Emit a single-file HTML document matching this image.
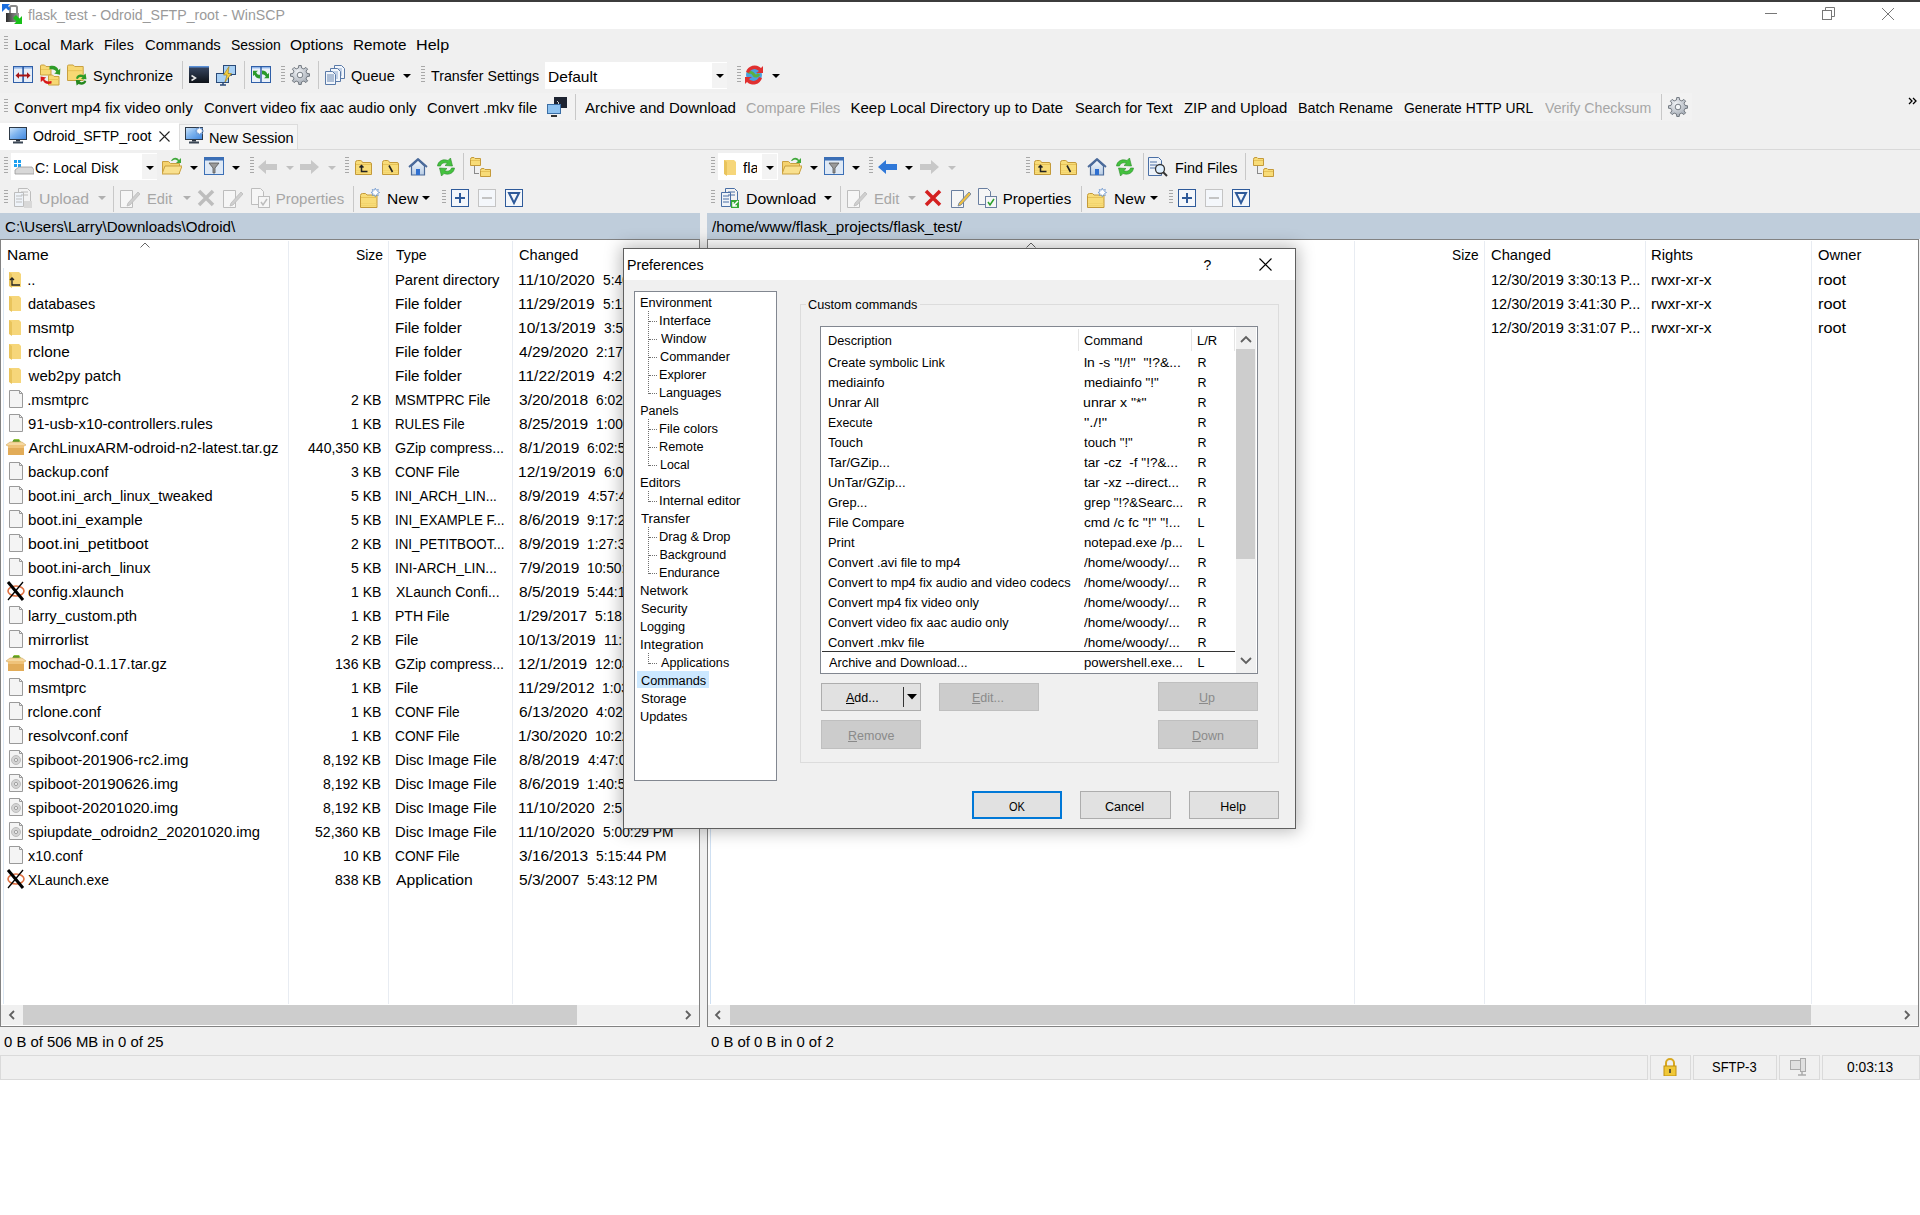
<!DOCTYPE html><html><head><meta charset="utf-8"><title>WinSCP</title><style>
*{margin:0;padding:0;box-sizing:border-box}
html,body{width:1920px;height:1215px;overflow:hidden;background:#fff}
body{position:relative;font-family:"Liberation Sans",sans-serif;font-size:15px;color:#000}
.t{position:absolute;white-space:pre;font-size:15px;line-height:15px}
.r{position:absolute}
.u{text-decoration:underline}
</style></head><body>
<div class="r" style="left:0px;top:0px;width:1920px;height:1080px;background:#f0f0f0;"></div>
<div class="r" style="left:0px;top:0px;width:1920px;height:2px;background:#3c3c3c;"></div>
<div class="r" style="left:0px;top:2px;width:1920px;height:27px;background:#ffffff;"></div>
<svg class="r" style="left:0px;top:0px" width="24" height="26" viewBox="0 0 24 26"><defs><linearGradient id="lg" x1="0" y1="0" x2="1" y2="0"><stop offset="0" stop-color="#2a2a2a"/><stop offset="0.5" stop-color="#6a6a6a"/><stop offset="1" stop-color="#9a9a9a"/></linearGradient></defs><path d="M10 14V7.5a1.5 1.5 0 0 1 1.5-1.5h4a1.5 1.5 0 0 1 1.5 1.5V14" fill="none" stroke="#8a8a8a" stroke-width="2"/><rect x="6" y="13" width="13" height="9" fill="url(#lg)"/><path d="M2 4h8L8 6l2.5 2.5-2 2L6 8l-4 4z" fill="#1a6ee0"/><path d="M22 16v8h-8l2.5-2.5L13 18l3-3 3.5 3.5z" fill="#18c018"/></svg>
<div class="t" style="left:27.81px;top:7px;color:#9a9a9a;transform:scaleX(0.9422);transform-origin:0 0;">flask_test - Odroid_SFTP_root - WinSCP</div>
<div class="r" style="left:1765px;top:13px;width:12px;height:1px;background:#777;"></div>
<svg class="r" style="left:1822px;top:7px" width="14" height="14" viewBox="0 0 14 14"><rect x="0.5" y="3.5" width="9" height="9" fill="none" stroke="#777"/><path d="M3.5 3.5v-3h9v9h-3" fill="none" stroke="#777"/></svg>
<svg class="r" style="left:1881px;top:7px" width="14" height="14" viewBox="0 0 14 14"><path d="M1 1l12 12M13 1L1 13" stroke="#777" stroke-width="1"/></svg>
<svg class="r" style="left:4px;top:36px" width="4" height="16" viewBox="0 0 4 16"><rect x="0" y="0" width="4" height="1" fill="#a8a8a8"/><rect x="0" y="3" width="4" height="1" fill="#a8a8a8"/><rect x="0" y="6" width="4" height="1" fill="#a8a8a8"/><rect x="0" y="9" width="4" height="1" fill="#a8a8a8"/><rect x="0" y="12" width="4" height="1" fill="#a8a8a8"/></svg>
<div class="t" style="left:14.40px;top:37px;">Local</div>
<div class="t" style="left:60.29px;top:37px;transform:scaleX(1.0093);transform-origin:0 0;">Mark</div>
<div class="t" style="left:104.47px;top:37px;transform:scaleX(0.9383);transform-origin:0 0;">Files</div>
<div class="t" style="left:144.71px;top:37px;transform:scaleX(0.9881);transform-origin:0 0;">Commands</div>
<div class="t" style="left:230.94px;top:37px;transform:scaleX(0.9315);transform-origin:0 0;">Session</div>
<div class="t" style="left:290.28px;top:37px;transform:scaleX(1.0297);transform-origin:0 0;">Options</div>
<div class="t" style="left:352.78px;top:37px;transform:scaleX(1.0178);transform-origin:0 0;">Remote</div>
<div class="t" style="left:416.21px;top:37px;transform:scaleX(1.0739);transform-origin:0 0;">Help</div>
<svg class="r" style="left:4px;top:66px" width="4" height="19" viewBox="0 0 4 19"><rect x="0" y="0" width="4" height="1" fill="#a8a8a8"/><rect x="0" y="3" width="4" height="1" fill="#a8a8a8"/><rect x="0" y="6" width="4" height="1" fill="#a8a8a8"/><rect x="0" y="9" width="4" height="1" fill="#a8a8a8"/><rect x="0" y="12" width="4" height="1" fill="#a8a8a8"/><rect x="0" y="15" width="4" height="1" fill="#a8a8a8"/></svg>
<svg class="r" style="left:13px;top:66px" width="20" height="17" viewBox="0 0 20 17"><rect x="0.5" y="0.5" width="19" height="16" fill="#e6eef8" stroke="#2f5fa8"/><rect x="1" y="1" width="18" height="1.6" fill="#8fb4e8"/><rect x="9.3" y="0.5" width="1.6" height="16" fill="#2756a0"/><path d="M2.5 9.5l3.5-3.3v2.3h8v-2.3l3.5 3.3-3.5 3.3v-2.3h-8v2.3z" fill="#a81616"/></svg>
<svg class="r" style="left:40px;top:64px" width="22" height="22" viewBox="0 0 22 22"><path d="M0.5 3V2a1 1 0 0 1 1-1h3l1.5 1.5h5V11H0.5z" fill="#f7d873" stroke="#c9a040"/><rect x="1" y="5" width="10" height="1" fill="#e9c65a"/><path d="M8.5 13v-1a1 1 0 0 1 1-1h3l1.5 1.5h5V21H8.5z" fill="#f7d873" stroke="#c9a040"/><rect x="9" y="15" width="10" height="1" fill="#e9c65a"/><path d="M9.5 2.2C14 1 17.5 2.5 18.5 6.2L20.3 4.4 20 10.8 14.2 9.6 16.3 8C15.4 5.4 12.8 4.8 9.5 5.4z" fill="#2e9c28"/><path d="M11.5 19.6C7.2 20.8 3.8 19.4 3 16.2L0.8 18 0.6 12.6 6.2 13.6 4.2 15.1C5.2 17.3 8 17.9 11.5 17z" fill="#d81818"/></svg>
<svg class="r" style="left:67px;top:64px" width="22" height="22" viewBox="0 0 22 22"><path d="M0.5 4V2.2a1.2 1.2 0 0 1 1.2-1.2h4.5l1.5 1.5h8.5V16.5H0.5z" fill="#f7d873" stroke="#c9a040"/><rect x="1" y="6" width="15" height="1.2" fill="#e9c65a"/><path d="M9 14.5C9.5 10.8 13.5 9.5 16.6 11.2L18.6 9.6 19.5 15.2 13.8 15 15.6 13.6C13.6 12.6 11.6 13.2 11 15z" fill="#2e9c28"/><path d="M19.3 17C18.6 20.6 14.6 21.8 11.6 20.1L9.6 21.6 8.8 16 14.4 16.3 12.6 17.6C14.5 18.6 16.6 18.2 17.3 16.5z" fill="#25881f"/></svg>
<div class="t" style="left:93.42px;top:68px;transform:scaleX(0.9717);transform-origin:0 0;">Synchronize</div>
<div class="r" style="left:182px;top:61px;width:1px;height:28px;background:#c8c8c8;"></div>
<svg class="r" style="left:189px;top:66px" width="20" height="17" viewBox="0 0 20 17"><defs><linearGradient id="cg" x1="0" y1="0" x2="0" y2="1"><stop offset="0" stop-color="#3a4a66"/><stop offset="1" stop-color="#0e1218"/></linearGradient></defs><rect x="0" y="0" width="20" height="17" fill="url(#cg)"/><rect x="0" y="0" width="20" height="1.5" fill="#5a90d8"/><path d="M2.5 9.5l4 2.5-4 2.5" fill="none" stroke="#e8e8e8" stroke-width="1.5"/></svg>
<svg class="r" style="left:216px;top:64px" width="22" height="22" viewBox="0 0 22 22"><rect x="7.5" y="1.5" width="12" height="9" fill="#a8d0f4" stroke="#2a4a78"/><path d="M12 11h4" stroke="#2a4a78" stroke-width="1.5"/><rect x="0.5" y="9.5" width="12" height="9" fill="#a8d0f4" stroke="#2a4a78"/><path d="M4 21h6M7 19v2" stroke="#2a4a78" stroke-width="1.5"/><path d="M13 2.5L7.5 11h3.5L9 18l6.5-8.5H12z" fill="#f4d040" stroke="#a88420" stroke-width="0.7"/></svg>
<div class="r" style="left:244px;top:61px;width:1px;height:28px;background:#c8c8c8;"></div>
<svg class="r" style="left:251px;top:66px" width="20" height="17" viewBox="0 0 20 17"><rect x="0.5" y="0.5" width="19" height="16" fill="#eaf1fa" stroke="#2f5fa8"/><rect x="1" y="1" width="18" height="1.4" fill="#8fb4e8"/><rect x="9.3" y="0.5" width="1.4" height="16" fill="#2756a0"/><path d="M11 4.5c3 0 5 1.5 5.3 3.8l1.7-1.3v5.2h-5l1.8-1.4c-.4-1.6-1.8-2.6-3.8-2.6z" fill="#2a9a2a"/><path d="M9 12.5c-3 0-5-1.5-5.3-3.8L2 10V4.8h5L5.2 6.2c.4 1.6 1.8 2.6 3.8 2.6z" fill="#2a9a2a"/></svg>
<svg class="r" style="left:281px;top:66px" width="4" height="19" viewBox="0 0 4 19"><rect x="0" y="0" width="4" height="1" fill="#a8a8a8"/><rect x="0" y="3" width="4" height="1" fill="#a8a8a8"/><rect x="0" y="6" width="4" height="1" fill="#a8a8a8"/><rect x="0" y="9" width="4" height="1" fill="#a8a8a8"/><rect x="0" y="12" width="4" height="1" fill="#a8a8a8"/><rect x="0" y="15" width="4" height="1" fill="#a8a8a8"/></svg>
<svg class="r" style="left:290px;top:65px" width="20" height="20" viewBox="0 0 20 20"><defs><radialGradient id="gg290" cx="0.4" cy="0.35" r="0.7"><stop offset="0" stop-color="#f2f4f7"/><stop offset="1" stop-color="#9ea6b0"/></radialGradient></defs><polygon points="17.03,8.43 19.52,8.76 19.52,11.24 17.03,11.57 16.08,13.86 17.61,15.85 15.85,17.61 13.86,16.08 11.57,17.03 11.24,19.52 8.76,19.52 8.43,17.03 6.14,16.08 4.15,17.61 2.39,15.85 3.92,13.86 2.97,11.57 0.48,11.24 0.48,8.76 2.97,8.43 3.92,6.14 2.39,4.15 4.15,2.39 6.14,3.92 8.43,2.97 8.76,0.48 11.24,0.48 11.57,2.97 13.86,3.92 15.85,2.39 17.61,4.15 16.08,6.14" fill="url(#gg290)" stroke="#6a7078" stroke-width="0.9" stroke-linejoin="round"/><circle cx="10" cy="10" r="2.8" fill="#f4f6f8" stroke="#6a7078" stroke-width="0.9"/></svg>
<div class="r" style="left:318px;top:61px;width:1px;height:28px;background:#c8c8c8;"></div>
<svg class="r" style="left:325px;top:64px" width="21" height="21" viewBox="0 0 21 21"><path d="M9.5 1.5h7l3 3v10h-10z" fill="#f2f6fb" stroke="#5a7aa8"/><path d="M11 5h6M11 7h6M11 9h6M11 11h6" stroke="#7a9ac8" stroke-width="0.8"/><path d="M5.5 4.5h7l3 3v10h-10z" fill="#f2f6fb" stroke="#5a7aa8"/><path d="M7 8h6M7 10h6M7 12h6M7 14h6" stroke="#7a9ac8" stroke-width="0.8"/><path d="M0.5 7.5h7l3 3v10h-10z" fill="#f2f6fb" stroke="#5a7aa8"/><path d="M2 11h7M2 13h7M2 15h7M2 17h7" stroke="#5a7aa8" stroke-width="0.9"/></svg>
<div class="t" style="left:351.32px;top:68px;transform:scaleX(0.9725);transform-origin:0 0;">Queue</div>
<svg class="r" style="left:403px;top:74px" width="8" height="4" viewBox="0 0 8 4"><path d="M0 0H8L4 4Z" fill="#000"/></svg>
<svg class="r" style="left:421px;top:66px" width="4" height="19" viewBox="0 0 4 19"><rect x="0" y="0" width="4" height="1" fill="#a8a8a8"/><rect x="0" y="3" width="4" height="1" fill="#a8a8a8"/><rect x="0" y="6" width="4" height="1" fill="#a8a8a8"/><rect x="0" y="9" width="4" height="1" fill="#a8a8a8"/><rect x="0" y="12" width="4" height="1" fill="#a8a8a8"/><rect x="0" y="15" width="4" height="1" fill="#a8a8a8"/></svg>
<div class="t" style="left:431.41px;top:68px;transform:scaleX(0.9504);transform-origin:0 0;">Transfer Settings</div>
<div class="r" style="left:545px;top:62px;width:182px;height:27px;background:#ffffff;"></div>
<div class="r" style="left:712px;top:63px;width:15px;height:25px;background:#f3f3f3;"></div>
<svg class="r" style="left:716px;top:74px" width="8" height="4" viewBox="0 0 8 4"><path d="M0 0H8L4 4Z" fill="#000"/></svg>
<div class="t" style="left:547.76px;top:69px;transform:scaleX(1.0367);transform-origin:0 0;">Default</div>
<svg class="r" style="left:737px;top:66px" width="4" height="19" viewBox="0 0 4 19"><rect x="0" y="0" width="4" height="1" fill="#a8a8a8"/><rect x="0" y="3" width="4" height="1" fill="#a8a8a8"/><rect x="0" y="6" width="4" height="1" fill="#a8a8a8"/><rect x="0" y="9" width="4" height="1" fill="#a8a8a8"/><rect x="0" y="12" width="4" height="1" fill="#a8a8a8"/><rect x="0" y="15" width="4" height="1" fill="#a8a8a8"/></svg>
<svg class="r" style="left:744px;top:65px" width="20" height="20" viewBox="0 0 20 20"><circle cx="10" cy="10" r="8" fill="#4aa0e0"/><path d="M4 8c2-2 5 0 6 2s4 1 5-1" stroke="#5ab040" stroke-width="3" fill="none"/><path d="M2 7a9 9 0 0 1 15-4l2-2v7h-7l3-2a6 6 0 0 0-10 2z" fill="#e03030"/><path d="M18 13a9 9 0 0 1-15 4l-2 2v-7h7l-3 2a6 6 0 0 0 10-2z" fill="#e03030"/></svg>
<svg class="r" style="left:772px;top:74px" width="8" height="4" viewBox="0 0 8 4"><path d="M0 0H8L4 4Z" fill="#000"/></svg>
<div class="r" style="left:0px;top:93px;width:1692px;height:28px;background:#f2f2f2;"></div>
<svg class="r" style="left:4px;top:99px" width="4" height="16" viewBox="0 0 4 16"><rect x="0" y="0" width="4" height="1" fill="#a8a8a8"/><rect x="0" y="3" width="4" height="1" fill="#a8a8a8"/><rect x="0" y="6" width="4" height="1" fill="#a8a8a8"/><rect x="0" y="9" width="4" height="1" fill="#a8a8a8"/><rect x="0" y="12" width="4" height="1" fill="#a8a8a8"/></svg>
<div class="t" style="left:14.29px;top:100px;transform:scaleX(1.0114);transform-origin:0 0;">Convert mp4 fix video only</div>
<div class="t" style="left:203.90px;top:100px;">Convert video fix aac audio only</div>
<div class="t" style="left:427.31px;top:100px;transform:scaleX(0.9873);transform-origin:0 0;">Convert .mkv file</div>
<svg class="r" style="left:547px;top:97px" width="20" height="20" viewBox="0 0 20 20"><rect x="7.5" y="0.5" width="12" height="10" fill="#1d2330" stroke="#1d2330"/><path d="M10 4l2 2-2 2" stroke="#ccc" fill="none"/><rect x="0.5" y="7.5" width="13" height="9" fill="#8ec2f0" stroke="#3a6ea5"/><path d="M4 19h6" stroke="#333" stroke-width="2"/></svg>
<div class="r" style="left:575px;top:94px;width:1px;height:26px;background:#c8c8c8;"></div>
<div class="t" style="left:584.60px;top:100px;transform:scaleX(1.0060);transform-origin:0 0;">Archive and Download</div>
<div class="t" style="left:746.02px;top:100px;color:#a6a6a6;transform:scaleX(0.9668);transform-origin:0 0;">Compare Files</div>
<div class="t" style="left:850.49px;top:100px;">Keep Local Directory up to Date</div>
<div class="t" style="left:1075.02px;top:100px;transform:scaleX(0.9700);transform-origin:0 0;">Search for Text</div>
<div class="t" style="left:1183.60px;top:100px;transform:scaleX(0.9942);transform-origin:0 0;">ZIP and Upload</div>
<div class="t" style="left:1297.60px;top:100px;transform:scaleX(0.9574);transform-origin:0 0;">Batch Rename</div>
<div class="t" style="left:1403.95px;top:100px;transform:scaleX(0.9242);transform-origin:0 0;">Generate HTTP URL</div>
<div class="t" style="left:1544.60px;top:100px;color:#a6a6a6;transform:scaleX(0.9444);transform-origin:0 0;">Verify Checksum</div>
<div class="r" style="left:1661px;top:94px;width:1px;height:26px;background:#c8c8c8;"></div>
<svg class="r" style="left:1668px;top:97px" width="20" height="20" viewBox="0 0 20 20"><defs><radialGradient id="gg1668" cx="0.4" cy="0.35" r="0.7"><stop offset="0" stop-color="#f2f4f7"/><stop offset="1" stop-color="#9ea6b0"/></radialGradient></defs><polygon points="17.03,8.43 19.52,8.76 19.52,11.24 17.03,11.57 16.08,13.86 17.61,15.85 15.85,17.61 13.86,16.08 11.57,17.03 11.24,19.52 8.76,19.52 8.43,17.03 6.14,16.08 4.15,17.61 2.39,15.85 3.92,13.86 2.97,11.57 0.48,11.24 0.48,8.76 2.97,8.43 3.92,6.14 2.39,4.15 4.15,2.39 6.14,3.92 8.43,2.97 8.76,0.48 11.24,0.48 11.57,2.97 13.86,3.92 15.85,2.39 17.61,4.15 16.08,6.14" fill="url(#gg1668)" stroke="#6a7078" stroke-width="0.9" stroke-linejoin="round"/><circle cx="10" cy="10" r="2.8" fill="#f4f6f8" stroke="#6a7078" stroke-width="0.9"/></svg>
<svg class="r" style="left:1908px;top:97px" width="10" height="8" viewBox="0 0 10 8"><path d="M1 1l3 3-3 3M5 1l3 3-3 3" fill="none" stroke="#000" stroke-width="1.3"/></svg>
<div class="r" style="left:0px;top:149px;width:1920px;height:1px;background:#d9d9d9;"></div>
<div class="r" style="left:179px;top:124px;width:119px;height:25px;background:#f5f5f5;border:1px solid #dcdcdc;border-bottom:none"></div>
<div class="r" style="left:0px;top:123px;width:179px;height:27px;background:#ffffff;"></div>
<svg class="r" style="left:9px;top:127px" width="19" height="18" viewBox="0 0 19 18"><defs><linearGradient id="mg9" x1="0" y1="0" x2="1" y2="1"><stop offset="0" stop-color="#cfe6fb"/><stop offset="0.45" stop-color="#7fb4ee"/><stop offset="1" stop-color="#3f86de"/></linearGradient></defs><rect x="0.5" y="0.5" width="17" height="12" fill="url(#mg9)" stroke="#2e3a48"/><rect x="7" y="13" width="4" height="1.5" fill="#2c3440"/><rect x="4" y="14.5" width="10" height="2" fill="#3a4654"/></svg>
<div class="t" style="left:33.34px;top:128px;transform:scaleX(0.9408);transform-origin:0 0;">Odroid_SFTP_root</div>
<svg class="r" style="left:159px;top:131px" width="11" height="11" viewBox="0 0 11 11"><path d="M0.5 0.5l10 10M10.5 0.5l-10 10" stroke="#222" stroke-width="1.1"/></svg>
<svg class="r" style="left:185px;top:127px" width="19" height="18" viewBox="0 0 19 18"><defs><linearGradient id="mg185" x1="0" y1="0" x2="1" y2="1"><stop offset="0" stop-color="#cfe6fb"/><stop offset="0.45" stop-color="#7fb4ee"/><stop offset="1" stop-color="#3f86de"/></linearGradient></defs><rect x="0.5" y="0.5" width="17" height="12" fill="url(#mg185)" stroke="#2e3a48"/><rect x="7" y="13" width="4" height="1.5" fill="#2c3440"/><rect x="4" y="14.5" width="10" height="2" fill="#3a4654"/><polygon points="14.50,-0.20 15.42,1.78 17.47,1.03 16.72,3.08 18.70,4.00 16.72,4.92 17.47,6.97 15.42,6.22 14.50,8.20 13.58,6.22 11.53,6.97 12.28,4.92 10.30,4.00 12.28,3.08 11.53,1.03 13.58,1.78" fill="#ffffff" stroke="#5a8ac8" stroke-width="0.7"/></svg>
<div class="t" style="left:208.84px;top:130px;transform:scaleX(0.9660);transform-origin:0 0;">New Session</div>
<svg class="r" style="left:4px;top:157px" width="4" height="19" viewBox="0 0 4 19"><rect x="0" y="0" width="4" height="1" fill="#a8a8a8"/><rect x="0" y="3" width="4" height="1" fill="#a8a8a8"/><rect x="0" y="6" width="4" height="1" fill="#a8a8a8"/><rect x="0" y="9" width="4" height="1" fill="#a8a8a8"/><rect x="0" y="12" width="4" height="1" fill="#a8a8a8"/><rect x="0" y="15" width="4" height="1" fill="#a8a8a8"/></svg>
<div class="r" style="left:11px;top:153px;width:146px;height:27px;background:#ffffff;"></div>
<div class="r" style="left:142px;top:154px;width:15px;height:25px;background:#f3f3f3;"></div>
<svg class="r" style="left:14px;top:160px" width="20" height="16" viewBox="0 0 20 16"><rect x="0" y="0" width="3" height="3" fill="#1ea0f0"/><rect x="4" y="0" width="3" height="3" fill="#1ea0f0"/><rect x="0" y="4" width="3" height="3" fill="#1ea0f0"/><rect x="4" y="4" width="3" height="3" fill="#1ea0f0"/><path d="M1 10l4-3h13l2 3v4H1z" fill="#d8d8d8" stroke="#9a9a9a" stroke-width="0.8"/></svg>
<div class="t" style="left:35.34px;top:160px;transform:scaleX(0.9453);transform-origin:0 0;">C: Local Disk</div>
<svg class="r" style="left:146px;top:166px" width="8" height="4" viewBox="0 0 8 4"><path d="M0 0H8L4 4Z" fill="#000"/></svg>
<svg class="r" style="left:162px;top:157px" width="20" height="18" viewBox="0 0 20 18"><path d="M0.5 4.5h6l2 2h9v10h-17z" fill="#f5d26e" stroke="#c9a040"/><path d="M3 9h17l-3 8H0z" fill="#f9e08e" stroke="#c9a040"/><path d="M9 4c2-4 6-4 8-1l2-2v5h-5l2-2c-2-2-4-2-6 0z" fill="#3fa83a"/></svg>
<svg class="r" style="left:190px;top:166px" width="8" height="4" viewBox="0 0 8 4"><path d="M0 0H8L4 4Z" fill="#000"/></svg>
<svg class="r" style="left:204px;top:157px" width="20" height="18" viewBox="0 0 20 18"><rect x="0.5" y="0.5" width="19" height="17" fill="#dfe9f5" stroke="#3b6fb6"/><rect x="0.5" y="0.5" width="19" height="3" fill="#3b6fb6"/><path d="M5 6h10l-4 5v5h-2v-5z" fill="#9a9a9a" stroke="#555" stroke-width="0.8"/></svg>
<svg class="r" style="left:232px;top:166px" width="8" height="4" viewBox="0 0 8 4"><path d="M0 0H8L4 4Z" fill="#000"/></svg>
<svg class="r" style="left:250px;top:157px" width="4" height="19" viewBox="0 0 4 19"><rect x="0" y="0" width="4" height="1" fill="#a8a8a8"/><rect x="0" y="3" width="4" height="1" fill="#a8a8a8"/><rect x="0" y="6" width="4" height="1" fill="#a8a8a8"/><rect x="0" y="9" width="4" height="1" fill="#a8a8a8"/><rect x="0" y="12" width="4" height="1" fill="#a8a8a8"/><rect x="0" y="15" width="4" height="1" fill="#a8a8a8"/></svg>
<svg class="r" style="left:258px;top:159px" width="20" height="16" viewBox="0 0 20 16"><path d="M0 8l8-7v4h11v6H8v4z" fill="#c8c8c8"/></svg>
<svg class="r" style="left:286px;top:166px" width="8" height="4" viewBox="0 0 8 4"><path d="M0 0H8L4 4Z" fill="#c0c0c0"/></svg>
<svg class="r" style="left:300px;top:159px" width="20" height="16" viewBox="0 0 20 16"><path d="M19 8l-8-7v4H0v6h11v4z" fill="#c8c8c8"/></svg>
<svg class="r" style="left:328px;top:166px" width="8" height="4" viewBox="0 0 8 4"><path d="M0 0H8L4 4Z" fill="#c0c0c0"/></svg>
<svg class="r" style="left:345px;top:157px" width="4" height="19" viewBox="0 0 4 19"><rect x="0" y="0" width="4" height="1" fill="#a8a8a8"/><rect x="0" y="3" width="4" height="1" fill="#a8a8a8"/><rect x="0" y="6" width="4" height="1" fill="#a8a8a8"/><rect x="0" y="9" width="4" height="1" fill="#a8a8a8"/><rect x="0" y="12" width="4" height="1" fill="#a8a8a8"/><rect x="0" y="15" width="4" height="1" fill="#a8a8a8"/></svg>
<svg class="r" style="left:355px;top:159px" width="18" height="17" viewBox="0 0 18 17"><path d="M0.5 3.5Q0.5 1.5 2.5 1.5H5.5Q6.5 1.5 7 2.5L7.5 3.5H15Q16.5 3.5 16.5 5V15.5H0.5Z" fill="#f8dc78" stroke="#c49a3a"/><path d="M1 5.5h15" stroke="#e6c258"/><path d="M1 11.5h15M1 13.5h15" stroke="#efd068" stroke-width="0.7"/><path d="M4.5 8.5l2-2 2 2M6.5 6.8V12.5h6" fill="none" stroke="#222" stroke-width="1.5"/></svg>
<svg class="r" style="left:382px;top:159px" width="18" height="17" viewBox="0 0 18 17"><path d="M0.5 3.5Q0.5 1.5 2.5 1.5H5.5Q6.5 1.5 7 2.5L7.5 3.5H15Q16.5 3.5 16.5 5V15.5H0.5Z" fill="#f8dc78" stroke="#c49a3a"/><path d="M1 5.5h15" stroke="#e6c258"/><path d="M1 11.5h15M1 13.5h15" stroke="#efd068" stroke-width="0.7"/><path d="M7 6.5l3.5 6.5" stroke="#222" stroke-width="1.6"/></svg>
<svg class="r" style="left:408px;top:157px" width="20" height="19" viewBox="0 0 20 19"><defs><linearGradient id="hg" x1="0" y1="0" x2="0" y2="1"><stop offset="0" stop-color="#f4f8fc"/><stop offset="1" stop-color="#b8cce4"/></linearGradient></defs><path d="M3.5 9v9h13V9L10 3z" fill="url(#hg)" stroke="#4a6a9a" stroke-width="1.2"/><path d="M1 10L10 2l9 8" fill="none" stroke="#4a6a9a" stroke-width="1.8" stroke-linejoin="round"/><rect x="8" y="12" width="4" height="6" fill="#2f6fd0"/></svg>
<svg class="r" style="left:436px;top:157px" width="20" height="20" viewBox="0 0 20 20"><path d="M1.5 9C2 4 7 1.5 12 3.5L14.5 1 16.5 9 9 8.5 11.3 6.3C8 5 5 6.5 4.5 9Z" fill="#44c23e" stroke="#2a8a28" stroke-width="0.6"/><path d="M18.5 11C18 16 13 18.5 8 16.5L5.5 19 3.5 11 11 11.5 8.7 13.7C12 15 15 13.5 15.5 11Z" fill="#44c23e" stroke="#2a8a28" stroke-width="0.6"/></svg>
<div class="r" style="left:463px;top:153px;width:1px;height:27px;background:#c8c8c8;"></div>
<svg class="r" style="left:470px;top:157px" width="21" height="21" viewBox="0 0 21 21"><path d="M0.5 2.5Q0.5 0.5 2 0.5H4L5 1.5H10.5V8.5H0.5Z" fill="#f8dc78" stroke="#c49a3a"/><path d="M1 3.5h9" stroke="#e6c258"/><path d="M10.5 13.5Q10.5 11.5 12 11.5H14L15 12.5H20.5V19.5H10.5Z" fill="#f8dc78" stroke="#c49a3a"/><path d="M11 14.5h9" stroke="#e6c258"/><path d="M4.5 9.5v7h5" fill="none" stroke="#222" stroke-dasharray="1 1"/></svg>
<svg class="r" style="left:4px;top:190px" width="4" height="16" viewBox="0 0 4 16"><rect x="0" y="0" width="4" height="1" fill="#a8a8a8"/><rect x="0" y="3" width="4" height="1" fill="#a8a8a8"/><rect x="0" y="6" width="4" height="1" fill="#a8a8a8"/><rect x="0" y="9" width="4" height="1" fill="#a8a8a8"/><rect x="0" y="12" width="4" height="1" fill="#a8a8a8"/></svg>
<svg class="r" style="left:14px;top:188px" width="20" height="20" viewBox="0 0 20 20"><path d="M4.5 0.5h9l3 3v14h-12z" fill="#f3f3f3" stroke="#bdbdbd"/><path d="M0.5 4.5h9v14h-9z" fill="#eef3f9" stroke="#bdbdbd"/><path d="M2 8h6M2 11h6M2 14h6M7 4h7M7 7h7" stroke="#bdbdbd"/><path d="M10 13h8v7h-8z" fill="#d8d8d8"/></svg>
<div class="t" style="left:38.84px;top:191px;color:#a6a6a6;transform:scaleX(1.0549);transform-origin:0 0;">Upload</div>
<svg class="r" style="left:98px;top:196px" width="8" height="4" viewBox="0 0 8 4"><path d="M0 0H8L4 4Z" fill="#b0b0b0"/></svg>
<div class="r" style="left:113px;top:186px;width:1px;height:26px;background:#c8c8c8;"></div>
<svg class="r" style="left:120px;top:188px" width="20" height="20" viewBox="0 0 20 20"><path d="M0.5 2.5h12v17h-12z" fill="#f6f6f6" stroke="#bdbdbd"/><path d="M8 15l10-11 2 2-10 11-3 1z" fill="#cfcfcf" stroke="#bdbdbd" stroke-width="0.8"/></svg>
<div class="t" style="left:146.83px;top:191px;color:#a6a6a6;transform:scaleX(0.9756);transform-origin:0 0;">Edit</div>
<svg class="r" style="left:183px;top:196px" width="8" height="4" viewBox="0 0 8 4"><path d="M0 0H8L4 4Z" fill="#b0b0b0"/></svg>
<svg class="r" style="left:197px;top:189px" width="18" height="18" viewBox="0 0 18 18"><path d="M2 2l14 14M16 2L2 16" stroke="#bdbdbd" stroke-width="3.5"/></svg>
<svg class="r" style="left:223px;top:188px" width="20" height="20" viewBox="0 0 20 20"><path d="M0.5 2.5h12v17h-12z" fill="#f6f6f6" stroke="#bdbdbd"/><path d="M8 15l10-11 2 2-10 11-3 1z" fill="#cfcfcf" stroke="#bdbdbd" stroke-width="0.8"/></svg>
<svg class="r" style="left:251px;top:188px" width="20" height="20" viewBox="0 0 20 20"><path d="M0.5 0.5h9l3 3v13h-12z" fill="#f6f6f6" stroke="#bdbdbd"/><rect x="7.5" y="8.5" width="11" height="11" fill="#f6f6f6" stroke="#bdbdbd"/><path d="M10 14l2 3 4-6" fill="none" stroke="#bdbdbd" stroke-width="1.5"/></svg>
<div class="t" style="left:275.79px;top:191px;color:#a6a6a6;">Properties</div>
<div class="r" style="left:353px;top:186px;width:1px;height:26px;background:#c8c8c8;"></div>
<svg class="r" style="left:360px;top:188px" width="21" height="21" viewBox="0 0 21 21"><path d="M0.5 7.5Q0.5 5.5 2.5 5.5H5.5L7 7H17V19.5H0.5Z" fill="#f8dc78" stroke="#c49a3a"/><path d="M1 9.5h15.5" stroke="#e6c258"/><path d="M1 15.5h15.5M1 17.5h15.5" stroke="#efd068" stroke-width="0.7"/><polygon points="15.30,0.20 16.26,2.19 18.34,1.46 17.61,3.54 19.60,4.50 17.61,5.46 18.34,7.54 16.26,6.81 15.30,8.80 14.34,6.81 12.26,7.54 12.99,5.46 11.00,4.50 12.99,3.54 12.26,1.46 14.34,2.19" fill="#ffffff" stroke="#5a8ac8" stroke-width="0.7"/></svg>
<div class="t" style="left:386.75px;top:191px;transform:scaleX(1.0381);transform-origin:0 0;">New</div>
<svg class="r" style="left:422px;top:196px" width="8" height="4" viewBox="0 0 8 4"><path d="M0 0H8L4 4Z" fill="#000"/></svg>
<svg class="r" style="left:442px;top:190px" width="4" height="16" viewBox="0 0 4 16"><rect x="0" y="0" width="4" height="1" fill="#a8a8a8"/><rect x="0" y="3" width="4" height="1" fill="#a8a8a8"/><rect x="0" y="6" width="4" height="1" fill="#a8a8a8"/><rect x="0" y="9" width="4" height="1" fill="#a8a8a8"/><rect x="0" y="12" width="4" height="1" fill="#a8a8a8"/></svg>
<svg class="r" style="left:451px;top:189px" width="18" height="18" viewBox="0 0 18 18"><rect x="0.5" y="0.5" width="17" height="17" fill="#f4f7fb" stroke="#2e5a9a"/><path d="M9 4v10M4 9h10" stroke="#2e5a9a" stroke-width="2"/></svg>
<svg class="r" style="left:478px;top:189px" width="18" height="18" viewBox="0 0 18 18"><rect x="0.5" y="0.5" width="17" height="17" fill="#f4f7fb" stroke="#c4c4c4"/><path d="M4 9h10" stroke="#c4c4c4" stroke-width="2"/></svg>
<svg class="r" style="left:505px;top:189px" width="18" height="18" viewBox="0 0 18 18"><rect x="0.5" y="0.5" width="17" height="17" fill="#f4f7fb" stroke="#2e5a9a"/><path d="M4 4h10L9 14z" fill="none" stroke="#2e5a9a" stroke-width="2"/></svg>
<svg class="r" style="left:711px;top:157px" width="4" height="19" viewBox="0 0 4 19"><rect x="0" y="0" width="4" height="1" fill="#a8a8a8"/><rect x="0" y="3" width="4" height="1" fill="#a8a8a8"/><rect x="0" y="6" width="4" height="1" fill="#a8a8a8"/><rect x="0" y="9" width="4" height="1" fill="#a8a8a8"/><rect x="0" y="12" width="4" height="1" fill="#a8a8a8"/><rect x="0" y="15" width="4" height="1" fill="#a8a8a8"/></svg>
<div class="r" style="left:718px;top:153px;width:60px;height:27px;background:#ffffff;"></div>
<div class="r" style="left:762px;top:154px;width:15px;height:25px;background:#f3f3f3;"></div>
<svg class="r" style="left:724px;top:159px" width="12" height="17" viewBox="0 0 12 17"><path d="M0 1h10l2 2v13H2L0 14z" fill="#f6d67a"/><path d="M0 1l3 2v14L0 15z" fill="#e9c45c"/></svg>
<div class="r" style="left:743px;top:158px;width:13.5px;height:19px;overflow:hidden"><div class="t" style="left:0;top:2px">fla</div></div>
<svg class="r" style="left:766px;top:166px" width="8" height="4" viewBox="0 0 8 4"><path d="M0 0H8L4 4Z" fill="#000"/></svg>
<svg class="r" style="left:782px;top:157px" width="20" height="18" viewBox="0 0 20 18"><path d="M0.5 4.5h6l2 2h9v10h-17z" fill="#f5d26e" stroke="#c9a040"/><path d="M3 9h17l-3 8H0z" fill="#f9e08e" stroke="#c9a040"/><path d="M9 4c2-4 6-4 8-1l2-2v5h-5l2-2c-2-2-4-2-6 0z" fill="#3fa83a"/></svg>
<svg class="r" style="left:810px;top:166px" width="8" height="4" viewBox="0 0 8 4"><path d="M0 0H8L4 4Z" fill="#000"/></svg>
<svg class="r" style="left:824px;top:157px" width="20" height="18" viewBox="0 0 20 18"><rect x="0.5" y="0.5" width="19" height="17" fill="#dfe9f5" stroke="#3b6fb6"/><rect x="0.5" y="0.5" width="19" height="3" fill="#3b6fb6"/><path d="M5 6h10l-4 5v5h-2v-5z" fill="#9a9a9a" stroke="#555" stroke-width="0.8"/></svg>
<svg class="r" style="left:852px;top:166px" width="8" height="4" viewBox="0 0 8 4"><path d="M0 0H8L4 4Z" fill="#000"/></svg>
<svg class="r" style="left:869px;top:157px" width="4" height="19" viewBox="0 0 4 19"><rect x="0" y="0" width="4" height="1" fill="#a8a8a8"/><rect x="0" y="3" width="4" height="1" fill="#a8a8a8"/><rect x="0" y="6" width="4" height="1" fill="#a8a8a8"/><rect x="0" y="9" width="4" height="1" fill="#a8a8a8"/><rect x="0" y="12" width="4" height="1" fill="#a8a8a8"/><rect x="0" y="15" width="4" height="1" fill="#a8a8a8"/></svg>
<svg class="r" style="left:878px;top:159px" width="20" height="16" viewBox="0 0 20 16"><path d="M0 8l8-7v4h11v6H8v4z" fill="#2f78d8"/></svg>
<svg class="r" style="left:905px;top:166px" width="8" height="4" viewBox="0 0 8 4"><path d="M0 0H8L4 4Z" fill="#000"/></svg>
<svg class="r" style="left:920px;top:159px" width="20" height="16" viewBox="0 0 20 16"><path d="M19 8l-8-7v4H0v6h11v4z" fill="#c8c8c8"/></svg>
<svg class="r" style="left:948px;top:166px" width="8" height="4" viewBox="0 0 8 4"><path d="M0 0H8L4 4Z" fill="#c0c0c0"/></svg>
<svg class="r" style="left:1026px;top:157px" width="4" height="19" viewBox="0 0 4 19"><rect x="0" y="0" width="4" height="1" fill="#a8a8a8"/><rect x="0" y="3" width="4" height="1" fill="#a8a8a8"/><rect x="0" y="6" width="4" height="1" fill="#a8a8a8"/><rect x="0" y="9" width="4" height="1" fill="#a8a8a8"/><rect x="0" y="12" width="4" height="1" fill="#a8a8a8"/><rect x="0" y="15" width="4" height="1" fill="#a8a8a8"/></svg>
<svg class="r" style="left:1034px;top:159px" width="18" height="17" viewBox="0 0 18 17"><path d="M0.5 3.5Q0.5 1.5 2.5 1.5H5.5Q6.5 1.5 7 2.5L7.5 3.5H15Q16.5 3.5 16.5 5V15.5H0.5Z" fill="#f8dc78" stroke="#c49a3a"/><path d="M1 5.5h15" stroke="#e6c258"/><path d="M1 11.5h15M1 13.5h15" stroke="#efd068" stroke-width="0.7"/><path d="M4.5 8.5l2-2 2 2M6.5 6.8V12.5h6" fill="none" stroke="#222" stroke-width="1.5"/></svg>
<svg class="r" style="left:1060px;top:159px" width="18" height="17" viewBox="0 0 18 17"><path d="M0.5 3.5Q0.5 1.5 2.5 1.5H5.5Q6.5 1.5 7 2.5L7.5 3.5H15Q16.5 3.5 16.5 5V15.5H0.5Z" fill="#f8dc78" stroke="#c49a3a"/><path d="M1 5.5h15" stroke="#e6c258"/><path d="M1 11.5h15M1 13.5h15" stroke="#efd068" stroke-width="0.7"/><path d="M7 6.5l3.5 6.5" stroke="#222" stroke-width="1.6"/></svg>
<svg class="r" style="left:1087px;top:157px" width="20" height="19" viewBox="0 0 20 19"><defs><linearGradient id="hg" x1="0" y1="0" x2="0" y2="1"><stop offset="0" stop-color="#f4f8fc"/><stop offset="1" stop-color="#b8cce4"/></linearGradient></defs><path d="M3.5 9v9h13V9L10 3z" fill="url(#hg)" stroke="#4a6a9a" stroke-width="1.2"/><path d="M1 10L10 2l9 8" fill="none" stroke="#4a6a9a" stroke-width="1.8" stroke-linejoin="round"/><rect x="8" y="12" width="4" height="6" fill="#2f6fd0"/></svg>
<svg class="r" style="left:1115px;top:157px" width="20" height="20" viewBox="0 0 20 20"><path d="M1.5 9C2 4 7 1.5 12 3.5L14.5 1 16.5 9 9 8.5 11.3 6.3C8 5 5 6.5 4.5 9Z" fill="#44c23e" stroke="#2a8a28" stroke-width="0.6"/><path d="M18.5 11C18 16 13 18.5 8 16.5L5.5 19 3.5 11 11 11.5 8.7 13.7C12 15 15 13.5 15.5 11Z" fill="#44c23e" stroke="#2a8a28" stroke-width="0.6"/></svg>
<div class="r" style="left:1143px;top:153px;width:1px;height:27px;background:#c8c8c8;"></div>
<svg class="r" style="left:1148px;top:157px" width="20" height="20" viewBox="0 0 20 20"><path d="M0.5 0.5h10l3 3v15h-13z" fill="#eef3f9" stroke="#4a6fa5"/><path d="M2 5h7M2 8h7M2 11h5" stroke="#4a6fa5"/><circle cx="12" cy="12" r="4.5" fill="#dff0ff" stroke="#333" stroke-width="1.3"/><path d="M15 15l4 4" stroke="#333" stroke-width="2"/></svg>
<div class="t" style="left:1174.85px;top:160px;transform:scaleX(0.9589);transform-origin:0 0;">Find Files</div>
<div class="r" style="left:1245px;top:153px;width:1px;height:27px;background:#c8c8c8;"></div>
<svg class="r" style="left:1253px;top:157px" width="21" height="21" viewBox="0 0 21 21"><path d="M0.5 2.5Q0.5 0.5 2 0.5H4L5 1.5H10.5V8.5H0.5Z" fill="#f8dc78" stroke="#c49a3a"/><path d="M1 3.5h9" stroke="#e6c258"/><path d="M10.5 13.5Q10.5 11.5 12 11.5H14L15 12.5H20.5V19.5H10.5Z" fill="#f8dc78" stroke="#c49a3a"/><path d="M11 14.5h9" stroke="#e6c258"/><path d="M4.5 9.5v7h5" fill="none" stroke="#222" stroke-dasharray="1 1"/></svg>
<svg class="r" style="left:711px;top:190px" width="4" height="16" viewBox="0 0 4 16"><rect x="0" y="0" width="4" height="1" fill="#a8a8a8"/><rect x="0" y="3" width="4" height="1" fill="#a8a8a8"/><rect x="0" y="6" width="4" height="1" fill="#a8a8a8"/><rect x="0" y="9" width="4" height="1" fill="#a8a8a8"/><rect x="0" y="12" width="4" height="1" fill="#a8a8a8"/></svg>
<svg class="r" style="left:721px;top:188px" width="20" height="20" viewBox="0 0 20 20"><path d="M4.5 0.5h9l3 3v14h-12z" fill="#f3f3f3" stroke="#4a6fa5"/><path d="M0.5 4.5h9v14h-9z" fill="#eef3f9" stroke="#4a6fa5"/><path d="M2 8h6M2 11h6M2 14h6M7 4h7M7 7h7" stroke="#4a6fa5"/><path d="M10 12h8v8h-8z" fill="#34a834"/><path d="M17 13l-5 5M12 14v4h4" stroke="#fff" stroke-width="1.5" fill="none"/></svg>
<div class="t" style="left:745.74px;top:191px;transform:scaleX(1.0526);transform-origin:0 0;">Download</div>
<svg class="r" style="left:824px;top:196px" width="8" height="4" viewBox="0 0 8 4"><path d="M0 0H8L4 4Z" fill="#000"/></svg>
<div class="r" style="left:840px;top:186px;width:1px;height:26px;background:#c8c8c8;"></div>
<svg class="r" style="left:847px;top:188px" width="20" height="20" viewBox="0 0 20 20"><path d="M0.5 2.5h12v17h-12z" fill="#f6f6f6" stroke="#bdbdbd"/><path d="M8 15l10-11 2 2-10 11-3 1z" fill="#cfcfcf" stroke="#bdbdbd" stroke-width="0.8"/></svg>
<div class="t" style="left:873.83px;top:191px;color:#a6a6a6;transform:scaleX(0.9756);transform-origin:0 0;">Edit</div>
<svg class="r" style="left:908px;top:196px" width="8" height="4" viewBox="0 0 8 4"><path d="M0 0H8L4 4Z" fill="#b0b0b0"/></svg>
<svg class="r" style="left:924px;top:189px" width="18" height="18" viewBox="0 0 18 18"><path d="M2 2l14 14M16 2L2 16" stroke="#d42020" stroke-width="3.5"/></svg>
<svg class="r" style="left:951px;top:188px" width="20" height="20" viewBox="0 0 20 20"><path d="M0.5 2.5h12v17h-12z" fill="#f6f6f6" stroke="#6a7fa0"/><path d="M8 15l10-11 2 2-10 11-3 1z" fill="#f0c040" stroke="#6a7fa0" stroke-width="0.8"/></svg>
<svg class="r" style="left:978px;top:188px" width="20" height="20" viewBox="0 0 20 20"><path d="M0.5 0.5h9l3 3v13h-12z" fill="#f6f6f6" stroke="#6a7fa0"/><rect x="7.5" y="8.5" width="11" height="11" fill="#f6f6f6" stroke="#6a7fa0"/><path d="M10 14l2 3 4-6" fill="none" stroke="#2aa02a" stroke-width="1.5"/></svg>
<div class="t" style="left:1002.80px;top:191px;">Properties</div>
<div class="r" style="left:1081px;top:186px;width:1px;height:26px;background:#c8c8c8;"></div>
<svg class="r" style="left:1087px;top:188px" width="21" height="21" viewBox="0 0 21 21"><path d="M0.5 7.5Q0.5 5.5 2.5 5.5H5.5L7 7H17V19.5H0.5Z" fill="#f8dc78" stroke="#c49a3a"/><path d="M1 9.5h15.5" stroke="#e6c258"/><path d="M1 15.5h15.5M1 17.5h15.5" stroke="#efd068" stroke-width="0.7"/><polygon points="15.30,0.20 16.26,2.19 18.34,1.46 17.61,3.54 19.60,4.50 17.61,5.46 18.34,7.54 16.26,6.81 15.30,8.80 14.34,6.81 12.26,7.54 12.99,5.46 11.00,4.50 12.99,3.54 12.26,1.46 14.34,2.19" fill="#ffffff" stroke="#5a8ac8" stroke-width="0.7"/></svg>
<div class="t" style="left:1113.75px;top:191px;transform:scaleX(1.0381);transform-origin:0 0;">New</div>
<svg class="r" style="left:1150px;top:196px" width="8" height="4" viewBox="0 0 8 4"><path d="M0 0H8L4 4Z" fill="#000"/></svg>
<svg class="r" style="left:1169px;top:190px" width="4" height="16" viewBox="0 0 4 16"><rect x="0" y="0" width="4" height="1" fill="#a8a8a8"/><rect x="0" y="3" width="4" height="1" fill="#a8a8a8"/><rect x="0" y="6" width="4" height="1" fill="#a8a8a8"/><rect x="0" y="9" width="4" height="1" fill="#a8a8a8"/><rect x="0" y="12" width="4" height="1" fill="#a8a8a8"/></svg>
<svg class="r" style="left:1178px;top:189px" width="18" height="18" viewBox="0 0 18 18"><rect x="0.5" y="0.5" width="17" height="17" fill="#f4f7fb" stroke="#2e5a9a"/><path d="M9 4v10M4 9h10" stroke="#2e5a9a" stroke-width="2"/></svg>
<svg class="r" style="left:1205px;top:189px" width="18" height="18" viewBox="0 0 18 18"><rect x="0.5" y="0.5" width="17" height="17" fill="#f4f7fb" stroke="#c4c4c4"/><path d="M4 9h10" stroke="#c4c4c4" stroke-width="2"/></svg>
<svg class="r" style="left:1232px;top:189px" width="18" height="18" viewBox="0 0 18 18"><rect x="0.5" y="0.5" width="17" height="17" fill="#f4f7fb" stroke="#2e5a9a"/><path d="M4 4h10L9 14z" fill="none" stroke="#2e5a9a" stroke-width="2"/></svg>
<div class="r" style="left:0px;top:213px;width:700px;height:26px;background:#bfcddb;"></div>
<div class="t" style="left:4.79px;top:219px;transform:scaleX(1.0079);transform-origin:0 0;">C:\Users\Larry\Downloads\Odroid\</div>
<div class="r" style="left:707px;top:213px;width:1213px;height:26px;background:#bfcddb;"></div>
<div class="t" style="left:711.70px;top:219px;transform:scaleX(1.0163);transform-origin:0 0;">/home/www/flask_projects/flask_test/</div>
<div class="r" style="left:0px;top:239px;width:700px;height:788px;background:#ffffff;border:1px solid #828282"></div>
<div class="r" style="left:288px;top:241px;width:1px;height:763px;background:#e8ecf2;"></div>
<div class="r" style="left:388px;top:241px;width:1px;height:763px;background:#e8ecf2;"></div>
<div class="r" style="left:512px;top:241px;width:1px;height:763px;background:#e8ecf2;"></div>
<div class="r" style="left:3px;top:268px;width:1px;height:736px;background:#dde8f3;"></div>
<div class="t" style="left:7.05px;top:247px;transform:scaleX(1.0393);transform-origin:0 0;">Name</div>
<svg class="r" style="left:140px;top:242px" width="10" height="6" viewBox="0 0 10 6"><path d="M0.5 5.5l4.5-4.5 4.5 4.5" fill="none" stroke="#666"/></svg>
<div class="t" style="left:356.15px;top:247px;transform:scaleX(0.9247);transform-origin:0 0;">Size</div>
<div class="t" style="left:395.72px;top:247px;transform:scaleX(0.9430);transform-origin:0 0;">Type</div>
<div class="t" style="left:518.62px;top:247px;transform:scaleX(0.9747);transform-origin:0 0;">Changed</div>
<svg class="r" style="left:9px;top:271px" width="12" height="17" viewBox="0 0 12 17"><path d="M0 1h10l2 2v13H2L0 14z" fill="#f6d67a"/><path d="M0 1l3 2v14L0 15z" fill="#e9c45c"/></svg>
<svg class="r" style="left:9px;top:277px" width="12" height="10" viewBox="0 0 12 10"><path d="M1 3l2-2 2 2M3 1v7h8" fill="none" stroke="#222" stroke-width="1.3"/></svg>
<div class="t" style="left:27.20px;top:272px;">..</div>
<div class="t" style="left:394.82px;top:272px;transform:scaleX(0.9866);transform-origin:0 0;">Parent directory</div>
<div class="t" style="left:518.36px;top:272px;transform:scaleX(1.0346);transform-origin:0 0;">11/10/2020</div>
<div class="t" style="left:603.05px;top:272px;transform:scaleX(0.9186);transform-origin:0 0;">5:40:12 PM</div>
<svg class="r" style="left:9px;top:295px" width="12" height="17" viewBox="0 0 12 17"><path d="M0 1h10l2 2v13H2L0 14z" fill="#f6d67a"/><path d="M0 1l3 2v14L0 15z" fill="#e9c45c"/></svg>
<div class="t" style="left:27.92px;top:296px;transform:scaleX(0.9706);transform-origin:0 0;">databases</div>
<div class="t" style="left:394.78px;top:296px;transform:scaleX(1.0155);transform-origin:0 0;">File folder</div>
<div class="t" style="left:518.36px;top:296px;transform:scaleX(1.0346);transform-origin:0 0;">11/29/2019</div>
<div class="t" style="left:602.95px;top:296px;transform:scaleX(0.9186);transform-origin:0 0;">5:12:41 PM</div>
<svg class="r" style="left:9px;top:319px" width="12" height="17" viewBox="0 0 12 17"><path d="M0 1h10l2 2v13H2L0 14z" fill="#f6d67a"/><path d="M0 1l3 2v14L0 15z" fill="#e9c45c"/></svg>
<div class="t" style="left:27.57px;top:320px;transform:scaleX(1.0298);transform-origin:0 0;">msmtp</div>
<div class="t" style="left:394.78px;top:320px;transform:scaleX(1.0155);transform-origin:0 0;">File folder</div>
<div class="t" style="left:518.36px;top:320px;transform:scaleX(1.0346);transform-origin:0 0;">10/13/2019</div>
<div class="t" style="left:604.18px;top:320px;transform:scaleX(0.9186);transform-origin:0 0;">3:52:10 PM</div>
<svg class="r" style="left:9px;top:343px" width="12" height="17" viewBox="0 0 12 17"><path d="M0 1h10l2 2v13H2L0 14z" fill="#f6d67a"/><path d="M0 1l3 2v14L0 15z" fill="#e9c45c"/></svg>
<div class="t" style="left:27.58px;top:344px;transform:scaleX(1.0229);transform-origin:0 0;">rclone</div>
<div class="t" style="left:394.78px;top:344px;transform:scaleX(1.0155);transform-origin:0 0;">File folder</div>
<div class="t" style="left:519.19px;top:344px;transform:scaleX(1.0346);transform-origin:0 0;">4/29/2020</div>
<div class="t" style="left:596.34px;top:344px;transform:scaleX(0.9186);transform-origin:0 0;">2:17:36 PM</div>
<svg class="r" style="left:9px;top:367px" width="12" height="17" viewBox="0 0 12 17"><path d="M0 1h10l2 2v13H2L0 14z" fill="#f6d67a"/><path d="M0 1l3 2v14L0 15z" fill="#e9c45c"/></svg>
<div class="t" style="left:28.60px;top:368px;">web2py patch</div>
<div class="t" style="left:394.78px;top:368px;transform:scaleX(1.0155);transform-origin:0 0;">File folder</div>
<div class="t" style="left:518.36px;top:368px;transform:scaleX(1.0346);transform-origin:0 0;">11/22/2019</div>
<div class="t" style="left:603.22px;top:368px;transform:scaleX(0.9186);transform-origin:0 0;">4:27:08 PM</div>
<svg class="r" style="left:9px;top:390px" width="14" height="18" viewBox="0 0 14 18"><path d="M0.5 0.5h10l3 3v14h-13z" fill="#f4f4f4" stroke="#9a9a9a"/><path d="M10.5 0.5v3h3" fill="none" stroke="#9a9a9a"/></svg>
<div class="t" style="left:27.20px;top:392px;">.msmtprc</div>
<div class="t" style="left:350.71px;top:392px;transform:scaleX(0.9367);transform-origin:0 0;">2 KB</div>
<div class="t" style="left:394.90px;top:392px;transform:scaleX(0.9169);transform-origin:0 0;">MSMTPRC File</div>
<div class="t" style="left:518.98px;top:392px;transform:scaleX(1.0346);transform-origin:0 0;">3/20/2018</div>
<div class="t" style="left:596.03px;top:392px;transform:scaleX(0.9186);transform-origin:0 0;">6:02:33 PM</div>
<svg class="r" style="left:9px;top:414px" width="14" height="18" viewBox="0 0 14 18"><path d="M0.5 0.5h10l3 3v14h-13z" fill="#f4f4f4" stroke="#9a9a9a"/><path d="M10.5 0.5v3h3" fill="none" stroke="#9a9a9a"/></svg>
<div class="t" style="left:27.80px;top:416px;transform:scaleX(0.9935);transform-origin:0 0;">91-usb-x10-controllers.rules</div>
<div class="t" style="left:350.71px;top:416px;transform:scaleX(0.9367);transform-origin:0 0;">1 KB</div>
<div class="t" style="left:394.93px;top:416px;transform:scaleX(0.8876);transform-origin:0 0;">RULES File</div>
<div class="t" style="left:518.88px;top:416px;transform:scaleX(1.0346);transform-origin:0 0;">8/25/2019</div>
<div class="t" style="left:595.55px;top:416px;transform:scaleX(0.9186);transform-origin:0 0;">1:00:52 PM</div>
<svg class="r" style="left:6px;top:439px" width="20" height="16" viewBox="0 0 20 16"><path d="M6 3l2-3h5l2 3z" fill="#8cbf3a"/><path d="M7 1h6v3H7z" fill="#5f9a2a"/><path d="M0 6l4-3h12l4 3-2 1H2z" fill="#f6d9a0" stroke="#d2a860" stroke-width="0.6"/><rect x="2" y="6" width="16" height="10" fill="#e2ac58"/><rect x="2" y="6" width="16" height="3" fill="#efc37a"/></svg>
<div class="t" style="left:28.50px;top:440px;">ArchLinuxARM-odroid-n2-latest.tar.gz</div>
<div class="t" style="left:307.72px;top:440px;transform:scaleX(0.9367);transform-origin:0 0;">440,350 KB</div>
<div class="t" style="left:395.33px;top:440px;transform:scaleX(0.9554);transform-origin:0 0;">GZip compress...</div>
<div class="t" style="left:518.88px;top:440px;transform:scaleX(1.0346);transform-origin:0 0;">8/1/2019</div>
<div class="t" style="left:587.23px;top:440px;transform:scaleX(0.9186);transform-origin:0 0;">6:02:55 PM</div>
<svg class="r" style="left:9px;top:462px" width="14" height="18" viewBox="0 0 14 18"><path d="M0.5 0.5h10l3 3v14h-13z" fill="#f4f4f4" stroke="#9a9a9a"/><path d="M10.5 0.5v3h3" fill="none" stroke="#9a9a9a"/></svg>
<div class="t" style="left:27.61px;top:464px;transform:scaleX(0.9938);transform-origin:0 0;">backup.conf</div>
<div class="t" style="left:350.71px;top:464px;transform:scaleX(0.9367);transform-origin:0 0;">3 KB</div>
<div class="t" style="left:395.36px;top:464px;transform:scaleX(0.9137);transform-origin:0 0;">CONF File</div>
<div class="t" style="left:518.36px;top:464px;transform:scaleX(1.0346);transform-origin:0 0;">12/19/2019</div>
<div class="t" style="left:603.99px;top:464px;transform:scaleX(0.9186);transform-origin:0 0;">6:09:11 PM</div>
<svg class="r" style="left:9px;top:486px" width="14" height="18" viewBox="0 0 14 18"><path d="M0.5 0.5h10l3 3v14h-13z" fill="#f4f4f4" stroke="#9a9a9a"/><path d="M10.5 0.5v3h3" fill="none" stroke="#9a9a9a"/></svg>
<div class="t" style="left:27.62px;top:488px;transform:scaleX(0.9760);transform-origin:0 0;">boot.ini_arch_linux_tweaked</div>
<div class="t" style="left:350.71px;top:488px;transform:scaleX(0.9367);transform-origin:0 0;">5 KB</div>
<div class="t" style="left:394.84px;top:488px;transform:scaleX(0.8915);transform-origin:0 0;">INI_ARCH_LIN...</div>
<div class="t" style="left:518.88px;top:488px;transform:scaleX(1.0346);transform-origin:0 0;">8/9/2019</div>
<div class="t" style="left:587.60px;top:488px;transform:scaleX(0.9186);transform-origin:0 0;">4:57:44 PM</div>
<svg class="r" style="left:9px;top:510px" width="14" height="18" viewBox="0 0 14 18"><path d="M0.5 0.5h10l3 3v14h-13z" fill="#f4f4f4" stroke="#9a9a9a"/><path d="M10.5 0.5v3h3" fill="none" stroke="#9a9a9a"/></svg>
<div class="t" style="left:27.59px;top:512px;transform:scaleX(1.0107);transform-origin:0 0;">boot.ini_example</div>
<div class="t" style="left:350.71px;top:512px;transform:scaleX(0.9367);transform-origin:0 0;">5 KB</div>
<div class="t" style="left:394.84px;top:512px;transform:scaleX(0.8932);transform-origin:0 0;">INI_EXAMPLE F...</div>
<div class="t" style="left:518.88px;top:512px;transform:scaleX(1.0346);transform-origin:0 0;">8/6/2019</div>
<div class="t" style="left:587.23px;top:512px;transform:scaleX(0.9186);transform-origin:0 0;">9:17:26 PM</div>
<svg class="r" style="left:9px;top:534px" width="14" height="18" viewBox="0 0 14 18"><path d="M0.5 0.5h10l3 3v14h-13z" fill="#f4f4f4" stroke="#9a9a9a"/><path d="M10.5 0.5v3h3" fill="none" stroke="#9a9a9a"/></svg>
<div class="t" style="left:27.55px;top:536px;transform:scaleX(1.0547);transform-origin:0 0;">boot.ini_petitboot</div>
<div class="t" style="left:350.71px;top:536px;transform:scaleX(0.9367);transform-origin:0 0;">2 KB</div>
<div class="t" style="left:394.85px;top:536px;transform:scaleX(0.8873);transform-origin:0 0;">INI_PETITBOOT...</div>
<div class="t" style="left:518.88px;top:536px;transform:scaleX(1.0346);transform-origin:0 0;">8/9/2019</div>
<div class="t" style="left:586.86px;top:536px;transform:scaleX(0.9186);transform-origin:0 0;">1:27:33 PM</div>
<svg class="r" style="left:9px;top:558px" width="14" height="18" viewBox="0 0 14 18"><path d="M0.5 0.5h10l3 3v14h-13z" fill="#f4f4f4" stroke="#9a9a9a"/><path d="M10.5 0.5v3h3" fill="none" stroke="#9a9a9a"/></svg>
<div class="t" style="left:27.59px;top:560px;transform:scaleX(1.0058);transform-origin:0 0;">boot.ini-arch_linux</div>
<div class="t" style="left:350.71px;top:560px;transform:scaleX(0.9367);transform-origin:0 0;">5 KB</div>
<div class="t" style="left:394.81px;top:560px;transform:scaleX(0.9187);transform-origin:0 0;">INI-ARCH_LIN...</div>
<div class="t" style="left:518.78px;top:560px;transform:scaleX(1.0346);transform-origin:0 0;">7/9/2019</div>
<div class="t" style="left:586.76px;top:560px;transform:scaleX(0.9186);transform-origin:0 0;">10:50:51 PM</div>
<svg class="r" style="left:6px;top:581px" width="20" height="20" viewBox="0 0 20 20"><ellipse cx="10" cy="10" rx="8" ry="5" fill="none" stroke="#e07040" stroke-width="1.6"/><path d="M2 1L17 19" stroke="#000" stroke-width="3"/><path d="M17 1L2 19" stroke="#000" stroke-width="1.3"/></svg>
<div class="t" style="left:27.90px;top:584px;">config.xlaunch</div>
<div class="t" style="left:350.71px;top:584px;transform:scaleX(0.9367);transform-origin:0 0;">1 KB</div>
<div class="t" style="left:395.72px;top:584px;transform:scaleX(0.9341);transform-origin:0 0;">XLaunch Confi...</div>
<div class="t" style="left:518.88px;top:584px;transform:scaleX(1.0346);transform-origin:0 0;">8/5/2019</div>
<div class="t" style="left:587.32px;top:584px;transform:scaleX(0.9186);transform-origin:0 0;">5:44:16 PM</div>
<svg class="r" style="left:9px;top:606px" width="14" height="18" viewBox="0 0 14 18"><path d="M0.5 0.5h10l3 3v14h-13z" fill="#f4f4f4" stroke="#9a9a9a"/><path d="M10.5 0.5v3h3" fill="none" stroke="#9a9a9a"/></svg>
<div class="t" style="left:27.52px;top:608px;transform:scaleX(0.9835);transform-origin:0 0;">larry_custom.pth</div>
<div class="t" style="left:350.71px;top:608px;transform:scaleX(0.9367);transform-origin:0 0;">1 KB</div>
<div class="t" style="left:394.88px;top:608px;transform:scaleX(0.9327);transform-origin:0 0;">PTH File</div>
<div class="t" style="left:518.36px;top:608px;transform:scaleX(1.0346);transform-origin:0 0;">1/29/2017</div>
<div class="t" style="left:595.39px;top:608px;transform:scaleX(0.9186);transform-origin:0 0;">5:18:20 PM</div>
<svg class="r" style="left:9px;top:630px" width="14" height="18" viewBox="0 0 14 18"><path d="M0.5 0.5h10l3 3v14h-13z" fill="#f4f4f4" stroke="#9a9a9a"/><path d="M10.5 0.5v3h3" fill="none" stroke="#9a9a9a"/></svg>
<div class="t" style="left:27.55px;top:632px;transform:scaleX(1.0513);transform-origin:0 0;">mirrorlist</div>
<div class="t" style="left:350.71px;top:632px;transform:scaleX(0.9367);transform-origin:0 0;">2 KB</div>
<div class="t" style="left:394.84px;top:632px;transform:scaleX(0.9686);transform-origin:0 0;">File</div>
<div class="t" style="left:518.36px;top:632px;transform:scaleX(1.0346);transform-origin:0 0;">10/13/2019</div>
<div class="t" style="left:603.62px;top:632px;transform:scaleX(0.9186);transform-origin:0 0;">11:52:07 AM</div>
<svg class="r" style="left:6px;top:655px" width="20" height="16" viewBox="0 0 20 16"><path d="M6 3l2-3h5l2 3z" fill="#8cbf3a"/><path d="M7 1h6v3H7z" fill="#5f9a2a"/><path d="M0 6l4-3h12l4 3-2 1H2z" fill="#f6d9a0" stroke="#d2a860" stroke-width="0.6"/><rect x="2" y="6" width="16" height="10" fill="#e2ac58"/><rect x="2" y="6" width="16" height="3" fill="#efc37a"/></svg>
<div class="t" style="left:27.61px;top:656px;transform:scaleX(0.9849);transform-origin:0 0;">mochad-0.1.17.tar.gz</div>
<div class="t" style="left:335.07px;top:656px;transform:scaleX(0.9367);transform-origin:0 0;">136 KB</div>
<div class="t" style="left:395.33px;top:656px;transform:scaleX(0.9554);transform-origin:0 0;">GZip compress...</div>
<div class="t" style="left:518.36px;top:656px;transform:scaleX(1.0346);transform-origin:0 0;">12/1/2019</div>
<div class="t" style="left:595.04px;top:656px;transform:scaleX(0.9186);transform-origin:0 0;">12:03:10 PM</div>
<svg class="r" style="left:9px;top:678px" width="14" height="18" viewBox="0 0 14 18"><path d="M0.5 0.5h10l3 3v14h-13z" fill="#f4f4f4" stroke="#9a9a9a"/><path d="M10.5 0.5v3h3" fill="none" stroke="#9a9a9a"/></svg>
<div class="t" style="left:27.59px;top:680px;transform:scaleX(1.0142);transform-origin:0 0;">msmtprc</div>
<div class="t" style="left:350.71px;top:680px;transform:scaleX(0.9367);transform-origin:0 0;">1 KB</div>
<div class="t" style="left:394.84px;top:680px;transform:scaleX(0.9686);transform-origin:0 0;">File</div>
<div class="t" style="left:518.36px;top:680px;transform:scaleX(1.0346);transform-origin:0 0;">11/29/2012</div>
<div class="t" style="left:602.38px;top:680px;transform:scaleX(0.9186);transform-origin:0 0;">1:03:42 PM</div>
<svg class="r" style="left:9px;top:702px" width="14" height="18" viewBox="0 0 14 18"><path d="M0.5 0.5h10l3 3v14h-13z" fill="#f4f4f4" stroke="#9a9a9a"/><path d="M10.5 0.5v3h3" fill="none" stroke="#9a9a9a"/></svg>
<div class="t" style="left:27.60px;top:704px;">rclone.conf</div>
<div class="t" style="left:350.71px;top:704px;transform:scaleX(0.9367);transform-origin:0 0;">1 KB</div>
<div class="t" style="left:395.36px;top:704px;transform:scaleX(0.9137);transform-origin:0 0;">CONF File</div>
<div class="t" style="left:518.78px;top:704px;transform:scaleX(1.0346);transform-origin:0 0;">6/13/2020</div>
<div class="t" style="left:596.29px;top:704px;transform:scaleX(0.9186);transform-origin:0 0;">4:02:18 PM</div>
<svg class="r" style="left:9px;top:726px" width="14" height="18" viewBox="0 0 14 18"><path d="M0.5 0.5h10l3 3v14h-13z" fill="#f4f4f4" stroke="#9a9a9a"/><path d="M10.5 0.5v3h3" fill="none" stroke="#9a9a9a"/></svg>
<div class="t" style="left:27.61px;top:728px;transform:scaleX(0.9910);transform-origin:0 0;">resolvconf.conf</div>
<div class="t" style="left:350.71px;top:728px;transform:scaleX(0.9367);transform-origin:0 0;">1 KB</div>
<div class="t" style="left:395.36px;top:728px;transform:scaleX(0.9137);transform-origin:0 0;">CONF File</div>
<div class="t" style="left:518.36px;top:728px;transform:scaleX(1.0346);transform-origin:0 0;">1/30/2020</div>
<div class="t" style="left:595.14px;top:728px;transform:scaleX(0.9186);transform-origin:0 0;">10:22:19 PM</div>
<svg class="r" style="left:9px;top:750px" width="14" height="18" viewBox="0 0 14 18"><path d="M0.5 0.5h10l3 3v14h-13z" fill="#f4f4f4" stroke="#9a9a9a"/><path d="M10.5 0.5v3h3" fill="none" stroke="#9a9a9a"/><circle cx="7" cy="10" r="4.5" fill="#d4d4d4" stroke="#bdbdbd"/><circle cx="7" cy="10" r="1.6" fill="#f4f4f4" stroke="#a0a0a0"/></svg>
<div class="t" style="left:28.09px;top:752px;transform:scaleX(1.0179);transform-origin:0 0;">spiboot-201906-rc2.img</div>
<div class="t" style="left:323.36px;top:752px;transform:scaleX(0.9367);transform-origin:0 0;">8,192 KB</div>
<div class="t" style="left:394.82px;top:752px;transform:scaleX(0.9842);transform-origin:0 0;">Disc Image File</div>
<div class="t" style="left:518.88px;top:752px;transform:scaleX(1.0346);transform-origin:0 0;">8/8/2019</div>
<div class="t" style="left:587.60px;top:752px;transform:scaleX(0.9186);transform-origin:0 0;">4:47:05 PM</div>
<svg class="r" style="left:9px;top:774px" width="14" height="18" viewBox="0 0 14 18"><path d="M0.5 0.5h10l3 3v14h-13z" fill="#f4f4f4" stroke="#9a9a9a"/><path d="M10.5 0.5v3h3" fill="none" stroke="#9a9a9a"/><circle cx="7" cy="10" r="4.5" fill="#d4d4d4" stroke="#bdbdbd"/><circle cx="7" cy="10" r="1.6" fill="#f4f4f4" stroke="#a0a0a0"/></svg>
<div class="t" style="left:28.10px;top:776px;transform:scaleX(1.0122);transform-origin:0 0;">spiboot-20190626.img</div>
<div class="t" style="left:323.36px;top:776px;transform:scaleX(0.9367);transform-origin:0 0;">8,192 KB</div>
<div class="t" style="left:394.82px;top:776px;transform:scaleX(0.9842);transform-origin:0 0;">Disc Image File</div>
<div class="t" style="left:518.88px;top:776px;transform:scaleX(1.0346);transform-origin:0 0;">8/6/2019</div>
<div class="t" style="left:586.86px;top:776px;transform:scaleX(0.9186);transform-origin:0 0;">1:40:56 PM</div>
<svg class="r" style="left:9px;top:798px" width="14" height="18" viewBox="0 0 14 18"><path d="M0.5 0.5h10l3 3v14h-13z" fill="#f4f4f4" stroke="#9a9a9a"/><path d="M10.5 0.5v3h3" fill="none" stroke="#9a9a9a"/><circle cx="7" cy="10" r="4.5" fill="#d4d4d4" stroke="#bdbdbd"/><circle cx="7" cy="10" r="1.6" fill="#f4f4f4" stroke="#a0a0a0"/></svg>
<div class="t" style="left:28.10px;top:800px;transform:scaleX(1.0122);transform-origin:0 0;">spiboot-20201020.img</div>
<div class="t" style="left:323.36px;top:800px;transform:scaleX(0.9367);transform-origin:0 0;">8,192 KB</div>
<div class="t" style="left:394.82px;top:800px;transform:scaleX(0.9842);transform-origin:0 0;">Disc Image File</div>
<div class="t" style="left:518.36px;top:800px;transform:scaleX(1.0346);transform-origin:0 0;">11/10/2020</div>
<div class="t" style="left:602.96px;top:800px;transform:scaleX(0.9186);transform-origin:0 0;">2:57:13 PM</div>
<svg class="r" style="left:9px;top:822px" width="14" height="18" viewBox="0 0 14 18"><path d="M0.5 0.5h10l3 3v14h-13z" fill="#f4f4f4" stroke="#9a9a9a"/><path d="M10.5 0.5v3h3" fill="none" stroke="#9a9a9a"/><circle cx="7" cy="10" r="4.5" fill="#d4d4d4" stroke="#bdbdbd"/><circle cx="7" cy="10" r="1.6" fill="#f4f4f4" stroke="#a0a0a0"/></svg>
<div class="t" style="left:28.11px;top:824px;transform:scaleX(0.9867);transform-origin:0 0;">spiupdate_odroidn2_20201020.img</div>
<div class="t" style="left:315.49px;top:824px;transform:scaleX(0.9367);transform-origin:0 0;">52,360 KB</div>
<div class="t" style="left:394.82px;top:824px;transform:scaleX(0.9842);transform-origin:0 0;">Disc Image File</div>
<div class="t" style="left:518.36px;top:824px;transform:scaleX(1.0346);transform-origin:0 0;">11/10/2020</div>
<div class="t" style="left:603.05px;top:824px;transform:scaleX(0.9186);transform-origin:0 0;">5:00:29 PM</div>
<svg class="r" style="left:9px;top:846px" width="14" height="18" viewBox="0 0 14 18"><path d="M0.5 0.5h10l3 3v14h-13z" fill="#f4f4f4" stroke="#9a9a9a"/><path d="M10.5 0.5v3h3" fill="none" stroke="#9a9a9a"/></svg>
<div class="t" style="left:28.40px;top:848px;transform:scaleX(0.9594);transform-origin:0 0;">x10.conf</div>
<div class="t" style="left:342.84px;top:848px;transform:scaleX(0.9367);transform-origin:0 0;">10 KB</div>
<div class="t" style="left:395.36px;top:848px;transform:scaleX(0.9137);transform-origin:0 0;">CONF File</div>
<div class="t" style="left:518.98px;top:848px;transform:scaleX(1.0346);transform-origin:0 0;">3/16/2013</div>
<div class="t" style="left:596.12px;top:848px;transform:scaleX(0.9186);transform-origin:0 0;">5:15:44 PM</div>
<svg class="r" style="left:6px;top:869px" width="20" height="20" viewBox="0 0 20 20"><ellipse cx="10" cy="10" rx="8" ry="5" fill="none" stroke="#e07040" stroke-width="1.6"/><path d="M2 1L17 19" stroke="#000" stroke-width="3"/><path d="M17 1L2 19" stroke="#000" stroke-width="1.3"/></svg>
<div class="t" style="left:28.22px;top:872px;transform:scaleX(0.9238);transform-origin:0 0;">XLaunch.exe</div>
<div class="t" style="left:335.07px;top:872px;transform:scaleX(0.9367);transform-origin:0 0;">838 KB</div>
<div class="t" style="left:396.00px;top:872px;transform:scaleX(1.0470);transform-origin:0 0;">Application</div>
<div class="t" style="left:518.88px;top:872px;transform:scaleX(1.0346);transform-origin:0 0;">5/3/2007</div>
<div class="t" style="left:587.22px;top:872px;transform:scaleX(0.9186);transform-origin:0 0;">5:43:12 PM</div>
<div class="r" style="left:1px;top:1005px;width:698px;height:20px;background:#f0f0f0;"></div>
<div class="r" style="left:23px;top:1005px;width:554px;height:20px;background:#cdcdcd;"></div>
<svg class="r" style="left:8px;top:1010px" width="8" height="10" viewBox="0 0 8 10"><path d="M6 1L2 5l4 4" fill="none" stroke="#606060" stroke-width="1.8"/></svg>
<svg class="r" style="left:684px;top:1010px" width="8" height="10" viewBox="0 0 8 10"><path d="M2 1l4 4-4 4" fill="none" stroke="#606060" stroke-width="1.8"/></svg>
<div class="r" style="left:707px;top:239px;width:1212px;height:788px;background:#ffffff;border:1px solid #828282"></div>
<div class="r" style="left:1354px;top:241px;width:1px;height:763px;background:#e8ecf2;"></div>
<div class="r" style="left:1484px;top:241px;width:1px;height:763px;background:#e8ecf2;"></div>
<div class="r" style="left:1645px;top:241px;width:1px;height:763px;background:#e8ecf2;"></div>
<div class="r" style="left:1811px;top:241px;width:1px;height:763px;background:#e8ecf2;"></div>
<div class="r" style="left:710px;top:268px;width:1px;height:736px;background:#cfe0f2;"></div>
<svg class="r" style="left:1026px;top:242px" width="10" height="6" viewBox="0 0 10 6"><path d="M0.5 5.5l4.5-4.5 4.5 4.5" fill="none" stroke="#666"/></svg>
<div class="t" style="left:711.80px;top:247px;">Name</div>
<div class="t" style="left:1451.95px;top:247px;transform:scaleX(0.9140);transform-origin:0 0;">Size</div>
<div class="t" style="left:1490.61px;top:247px;transform:scaleX(0.9831);transform-origin:0 0;">Changed</div>
<div class="t" style="left:1651.31px;top:247px;transform:scaleX(0.9877);transform-origin:0 0;">Rights</div>
<div class="t" style="left:1817.61px;top:247px;transform:scaleX(0.9815);transform-origin:0 0;">Owner</div>
<svg class="r" style="left:716px;top:271px" width="12" height="17" viewBox="0 0 12 17"><path d="M0 1h10l2 2v13H2L0 14z" fill="#f6d67a"/><path d="M0 1l3 2v14L0 15z" fill="#e9c45c"/></svg>
<div class="t" style="left:1490.53px;top:272px;transform:scaleX(0.9690);transform-origin:0 0;">12/30/2019 3:30:13 P...</div>
<div class="t" style="left:1651.06px;top:272px;transform:scaleX(1.0401);transform-origin:0 0;">rwxr-xr-x</div>
<div class="t" style="left:1817.72px;top:272px;transform:scaleX(1.0884);transform-origin:0 0;">root</div>
<svg class="r" style="left:716px;top:295px" width="12" height="17" viewBox="0 0 12 17"><path d="M0 1h10l2 2v13H2L0 14z" fill="#f6d67a"/><path d="M0 1l3 2v14L0 15z" fill="#e9c45c"/></svg>
<div class="t" style="left:1490.53px;top:296px;transform:scaleX(0.9690);transform-origin:0 0;">12/30/2019 3:41:30 P...</div>
<div class="t" style="left:1651.06px;top:296px;transform:scaleX(1.0401);transform-origin:0 0;">rwxr-xr-x</div>
<div class="t" style="left:1817.72px;top:296px;transform:scaleX(1.0884);transform-origin:0 0;">root</div>
<svg class="r" style="left:716px;top:319px" width="12" height="17" viewBox="0 0 12 17"><path d="M0 1h10l2 2v13H2L0 14z" fill="#f6d67a"/><path d="M0 1l3 2v14L0 15z" fill="#e9c45c"/></svg>
<div class="t" style="left:1490.53px;top:320px;transform:scaleX(0.9690);transform-origin:0 0;">12/30/2019 3:31:07 P...</div>
<div class="t" style="left:1651.06px;top:320px;transform:scaleX(1.0401);transform-origin:0 0;">rwxr-xr-x</div>
<div class="t" style="left:1817.72px;top:320px;transform:scaleX(1.0884);transform-origin:0 0;">root</div>
<div class="r" style="left:708px;top:1005px;width:1210px;height:20px;background:#f0f0f0;"></div>
<div class="r" style="left:730px;top:1005px;width:1081px;height:20px;background:#cdcdcd;"></div>
<svg class="r" style="left:714px;top:1010px" width="8" height="10" viewBox="0 0 8 10"><path d="M6 1L2 5l4 4" fill="none" stroke="#606060" stroke-width="1.8"/></svg>
<svg class="r" style="left:1903px;top:1010px" width="8" height="10" viewBox="0 0 8 10"><path d="M2 1l4 4-4 4" fill="none" stroke="#606060" stroke-width="1.8"/></svg>
<div class="t" style="left:3.50px;top:1034px;transform:scaleX(0.9912);transform-origin:0 0;">0 B of 506 MB in 0 of 25</div>
<div class="t" style="left:710.50px;top:1034px;transform:scaleX(0.9943);transform-origin:0 0;">0 B of 0 B in 0 of 2</div>
<div class="r" style="left:0px;top:1055px;width:1648px;height:25px;background:transparent;border:1px solid #dadada"></div>
<div class="r" style="left:1650px;top:1055px;width:41px;height:25px;background:transparent;border:1px solid #dadada"></div>
<div class="r" style="left:1693px;top:1055px;width:84px;height:25px;background:transparent;border:1px solid #dadada"></div>
<div class="r" style="left:1779px;top:1055px;width:41px;height:25px;background:transparent;border:1px solid #dadada"></div>
<div class="r" style="left:1822px;top:1055px;width:98px;height:25px;background:transparent;border:1px solid #dadada"></div>
<svg class="r" style="left:1663px;top:1058px" width="14" height="18" viewBox="0 0 14 18"><path d="M3 8V5a4 4 0 0 1 8 0v3" fill="none" stroke="#d8a820" stroke-width="2"/><rect x="1" y="8" width="12" height="10" fill="#f0c838" stroke="#c09010"/><path d="M7 11v4" stroke="#333" stroke-width="1.5"/></svg>
<div class="t" style="left:1711.98px;top:1059px;transform:scaleX(0.8631);transform-origin:0 0;">SFTP-3</div>
<svg class="r" style="left:1790px;top:1058px" width="18" height="18" viewBox="0 0 18 18"><rect x="0.5" y="2.5" width="10" height="9" fill="#e0e0e0" stroke="#aaa"/><rect x="10.5" y="0.5" width="5" height="13" fill="#e0e0e0" stroke="#aaa"/><path d="M12 14v3M8 17h8" stroke="#aaa" stroke-width="1.5"/></svg>
<div class="t" style="left:1846.54px;top:1059px;transform:scaleX(0.9202);transform-origin:0 0;">0:03:13</div>
<div class="r" style="left:623px;top:248px;width:673px;height:581px;background:#f0f0f0;border:1px solid #5f5f5f;box-shadow:0 0 16px 2px rgba(0,0,0,0.28)"></div>
<div class="r" style="left:624px;top:249px;width:671px;height:31px;background:#ffffff;"></div>
<div class="t" style="left:626.58px;top:258px;font-size:14px;line-height:14px;transform:scaleX(1.0149);transform-origin:0 0;">Preferences</div>
<div class="t" style="left:1203.50px;top:258px;font-size:14px;line-height:14px;">?</div>
<svg class="r" style="left:1259px;top:258px" width="13" height="13" viewBox="0 0 13 13"><path d="M0.5 0.5l12 12M12.5 0.5l-12 12" stroke="#000" stroke-width="1.1"/></svg>
<div class="r" style="left:634px;top:291px;width:143px;height:490px;background:#ffffff;border:1px solid #828790"></div>
<div class="r" style="left:637px;top:671px;width:72px;height:17px;background:#cce8ff;"></div>
<div class="t" style="left:640.18px;top:297px;font-size:12.5px;line-height:12.5px;transform:scaleX(1.0246);transform-origin:0 0;">Environment</div>
<div class="t" style="left:659.32px;top:315px;font-size:12.5px;line-height:12.5px;transform:scaleX(1.0702);transform-origin:0 0;">Interface</div>
<div class="t" style="left:660.50px;top:333px;font-size:12.5px;line-height:12.5px;transform:scaleX(1.0157);transform-origin:0 0;">Window</div>
<div class="t" style="left:659.89px;top:351px;font-size:12.5px;line-height:12.5px;transform:scaleX(1.0162);transform-origin:0 0;">Commander</div>
<div class="t" style="left:659.48px;top:369px;font-size:12.5px;line-height:12.5px;transform:scaleX(1.0154);transform-origin:0 0;">Explorer</div>
<div class="t" style="left:659.49px;top:387px;font-size:12.5px;line-height:12.5px;transform:scaleX(1.0083);transform-origin:0 0;">Languages</div>
<div class="t" style="left:640.20px;top:405px;font-size:12.5px;line-height:12.5px;">Panels</div>
<div class="t" style="left:659.46px;top:423px;font-size:12.5px;line-height:12.5px;transform:scaleX(1.0360);transform-origin:0 0;">File colors</div>
<div class="t" style="left:659.48px;top:441px;font-size:12.5px;line-height:12.5px;transform:scaleX(1.0166);transform-origin:0 0;">Remote</div>
<div class="t" style="left:659.51px;top:459px;font-size:12.5px;line-height:12.5px;transform:scaleX(0.9893);transform-origin:0 0;">Local</div>
<div class="t" style="left:640.16px;top:477px;font-size:12.5px;line-height:12.5px;transform:scaleX(1.0427);transform-origin:0 0;">Editors</div>
<div class="t" style="left:659.33px;top:495px;font-size:12.5px;line-height:12.5px;transform:scaleX(1.0665);transform-origin:0 0;">Internal editor</div>
<div class="t" style="left:640.99px;top:513px;font-size:12.5px;line-height:12.5px;transform:scaleX(1.0613);transform-origin:0 0;">Transfer</div>
<div class="t" style="left:659.47px;top:531px;font-size:12.5px;line-height:12.5px;transform:scaleX(1.0294);transform-origin:0 0;">Drag &amp; Drop</div>
<div class="t" style="left:659.50px;top:549px;font-size:12.5px;line-height:12.5px;">Background</div>
<div class="t" style="left:659.49px;top:567px;font-size:12.5px;line-height:12.5px;transform:scaleX(1.0051);transform-origin:0 0;">Endurance</div>
<div class="t" style="left:640.15px;top:585px;font-size:12.5px;line-height:12.5px;transform:scaleX(1.0468);transform-origin:0 0;">Network</div>
<div class="t" style="left:640.69px;top:603px;font-size:12.5px;line-height:12.5px;transform:scaleX(1.0291);transform-origin:0 0;">Security</div>
<div class="t" style="left:640.19px;top:621px;font-size:12.5px;line-height:12.5px;transform:scaleX(1.0141);transform-origin:0 0;">Logging</div>
<div class="t" style="left:640.02px;top:639px;font-size:12.5px;line-height:12.5px;transform:scaleX(1.0734);transform-origin:0 0;">Integration</div>
<div class="t" style="left:660.50px;top:657px;font-size:12.5px;line-height:12.5px;transform:scaleX(1.0120);transform-origin:0 0;">Applications</div>
<div class="t" style="left:640.59px;top:675px;font-size:12.5px;line-height:12.5px;transform:scaleX(1.0207);transform-origin:0 0;">Commands</div>
<div class="t" style="left:640.68px;top:693px;font-size:12.5px;line-height:12.5px;transform:scaleX(1.0398);transform-origin:0 0;">Storage</div>
<div class="t" style="left:640.28px;top:711px;font-size:12.5px;line-height:12.5px;transform:scaleX(1.0177);transform-origin:0 0;">Updates</div>
<div class="r" style="left:648px;top:311px;width:1px;height:83px;border-left:1px dotted #707070"></div>
<div class="r" style="left:649px;top:321px;width:8px;height:1px;border-top:1px dotted #707070"></div>
<div class="r" style="left:649px;top:339px;width:8px;height:1px;border-top:1px dotted #707070"></div>
<div class="r" style="left:649px;top:357px;width:8px;height:1px;border-top:1px dotted #707070"></div>
<div class="r" style="left:649px;top:375px;width:8px;height:1px;border-top:1px dotted #707070"></div>
<div class="r" style="left:649px;top:393px;width:8px;height:1px;border-top:1px dotted #707070"></div>
<div class="r" style="left:648px;top:419px;width:1px;height:47px;border-left:1px dotted #707070"></div>
<div class="r" style="left:649px;top:429px;width:8px;height:1px;border-top:1px dotted #707070"></div>
<div class="r" style="left:649px;top:447px;width:8px;height:1px;border-top:1px dotted #707070"></div>
<div class="r" style="left:649px;top:465px;width:8px;height:1px;border-top:1px dotted #707070"></div>
<div class="r" style="left:648px;top:491px;width:1px;height:11px;border-left:1px dotted #707070"></div>
<div class="r" style="left:649px;top:501px;width:8px;height:1px;border-top:1px dotted #707070"></div>
<div class="r" style="left:648px;top:527px;width:1px;height:47px;border-left:1px dotted #707070"></div>
<div class="r" style="left:649px;top:537px;width:8px;height:1px;border-top:1px dotted #707070"></div>
<div class="r" style="left:649px;top:555px;width:8px;height:1px;border-top:1px dotted #707070"></div>
<div class="r" style="left:649px;top:573px;width:8px;height:1px;border-top:1px dotted #707070"></div>
<div class="r" style="left:648px;top:653px;width:1px;height:11px;border-left:1px dotted #707070"></div>
<div class="r" style="left:649px;top:663px;width:8px;height:1px;border-top:1px dotted #707070"></div>
<div class="r" style="left:800px;top:304px;width:479px;height:459px;background:transparent;border:1px solid #dcdcdc"></div>
<div class="r" style="left:806px;top:298px;width:114px;height:12px;background:#f0f0f0;"></div>
<div class="t" style="left:808.29px;top:299px;font-size:12.5px;line-height:12.5px;transform:scaleX(1.0159);transform-origin:0 0;">Custom commands</div>
<div class="r" style="left:820px;top:326px;width:438px;height:348px;background:#ffffff;border:1px solid #828790"></div>
<div class="r" style="left:1078px;top:329px;width:1px;height:22px;background:#e5e5e5;"></div>
<div class="r" style="left:1191px;top:329px;width:1px;height:22px;background:#e5e5e5;"></div>
<div class="r" style="left:1234px;top:329px;width:1px;height:22px;background:#e5e5e5;"></div>
<div class="t" style="left:827.58px;top:335px;font-size:12.5px;line-height:12.5px;transform:scaleX(1.0214);transform-origin:0 0;">Description</div>
<div class="t" style="left:1083.79px;top:335px;font-size:12.5px;line-height:12.5px;transform:scaleX(1.0142);transform-origin:0 0;">Command</div>
<div class="t" style="left:1197.36px;top:335px;font-size:12.5px;line-height:12.5px;transform:scaleX(1.0391);transform-origin:0 0;">L/R</div>
<div class="t" style="left:828.00px;top:357px;font-size:12.5px;line-height:12.5px;transform:scaleX(1.0078);transform-origin:0 0;">Create symbolic Link</div>
<div class="t" style="left:1083.51px;top:357px;font-size:12.5px;line-height:12.5px;transform:scaleX(1.1140);transform-origin:0 0;">ln -s &quot;!/!&quot;  &quot;!?&amp;...</div>
<div class="t" style="left:1197.40px;top:357px;font-size:12.5px;line-height:12.5px;">R</div>
<div class="t" style="left:827.77px;top:377px;font-size:12.5px;line-height:12.5px;transform:scaleX(1.0435);transform-origin:0 0;">mediainfo</div>
<div class="t" style="left:1083.55px;top:377px;font-size:12.5px;line-height:12.5px;transform:scaleX(1.0669);transform-origin:0 0;">mediainfo &quot;!&quot;</div>
<div class="t" style="left:1197.40px;top:377px;font-size:12.5px;line-height:12.5px;">R</div>
<div class="t" style="left:827.64px;top:397px;font-size:12.5px;line-height:12.5px;transform:scaleX(1.0626);transform-origin:0 0;">Unrar All</div>
<div class="t" style="left:1083.49px;top:397px;font-size:12.5px;line-height:12.5px;transform:scaleX(1.1330);transform-origin:0 0;">unrar x &quot;*&quot;</div>
<div class="t" style="left:1197.40px;top:397px;font-size:12.5px;line-height:12.5px;">R</div>
<div class="t" style="left:827.61px;top:417px;font-size:12.5px;line-height:12.5px;transform:scaleX(0.9862);transform-origin:0 0;">Execute</div>
<div class="t" style="left:1083.80px;top:417px;font-size:12.5px;line-height:12.5px;transform:scaleX(1.2011);transform-origin:0 0;">&quot;./!&quot;</div>
<div class="t" style="left:1197.40px;top:417px;font-size:12.5px;line-height:12.5px;">R</div>
<div class="t" style="left:828.39px;top:437px;font-size:12.5px;line-height:12.5px;transform:scaleX(1.0463);transform-origin:0 0;">Touch</div>
<div class="t" style="left:1084.29px;top:437px;font-size:12.5px;line-height:12.5px;transform:scaleX(1.0501);transform-origin:0 0;">touch &quot;!&quot;</div>
<div class="t" style="left:1197.40px;top:437px;font-size:12.5px;line-height:12.5px;">R</div>
<div class="t" style="left:828.39px;top:457px;font-size:12.5px;line-height:12.5px;transform:scaleX(1.0595);transform-origin:0 0;">Tar/GZip...</div>
<div class="t" style="left:1084.29px;top:457px;font-size:12.5px;line-height:12.5px;transform:scaleX(1.0869);transform-origin:0 0;">tar -cz  -f &quot;!?&amp;...</div>
<div class="t" style="left:1197.40px;top:457px;font-size:12.5px;line-height:12.5px;">R</div>
<div class="t" style="left:827.66px;top:477px;font-size:12.5px;line-height:12.5px;transform:scaleX(1.0428);transform-origin:0 0;">UnTar/GZip...</div>
<div class="t" style="left:1084.29px;top:477px;font-size:12.5px;line-height:12.5px;transform:scaleX(1.0857);transform-origin:0 0;">tar -xz --direct...</div>
<div class="t" style="left:1197.40px;top:477px;font-size:12.5px;line-height:12.5px;">R</div>
<div class="t" style="left:827.98px;top:497px;font-size:12.5px;line-height:12.5px;transform:scaleX(1.0274);transform-origin:0 0;">Grep...</div>
<div class="t" style="left:1083.88px;top:497px;font-size:12.5px;line-height:12.5px;transform:scaleX(1.0461);transform-origin:0 0;">grep &quot;!?&amp;Searc...</div>
<div class="t" style="left:1197.40px;top:497px;font-size:12.5px;line-height:12.5px;">R</div>
<div class="t" style="left:827.58px;top:517px;font-size:12.5px;line-height:12.5px;transform:scaleX(1.0190);transform-origin:0 0;">File Compare</div>
<div class="t" style="left:1083.85px;top:517px;font-size:12.5px;line-height:12.5px;transform:scaleX(1.0987);transform-origin:0 0;">cmd /c fc &quot;!&quot; &quot;!...</div>
<div class="t" style="left:1197.40px;top:517px;font-size:12.5px;line-height:12.5px;">L</div>
<div class="t" style="left:827.57px;top:537px;font-size:12.5px;line-height:12.5px;transform:scaleX(1.0325);transform-origin:0 0;">Print</div>
<div class="t" style="left:1083.55px;top:537px;font-size:12.5px;line-height:12.5px;transform:scaleX(1.0602);transform-origin:0 0;">notepad.exe /p...</div>
<div class="t" style="left:1197.40px;top:537px;font-size:12.5px;line-height:12.5px;">L</div>
<div class="t" style="left:827.98px;top:557px;font-size:12.5px;line-height:12.5px;transform:scaleX(1.0362);transform-origin:0 0;">Convert .avi file to mp4</div>
<div class="t" style="left:1084.40px;top:557px;font-size:12.5px;line-height:12.5px;transform:scaleX(1.0849);transform-origin:0 0;">/home/woody/...</div>
<div class="t" style="left:1197.40px;top:557px;font-size:12.5px;line-height:12.5px;">R</div>
<div class="t" style="left:827.98px;top:577px;font-size:12.5px;line-height:12.5px;transform:scaleX(1.0268);transform-origin:0 0;">Convert to mp4 fix audio and video codecs</div>
<div class="t" style="left:1084.40px;top:577px;font-size:12.5px;line-height:12.5px;transform:scaleX(1.0849);transform-origin:0 0;">/home/woody/...</div>
<div class="t" style="left:1197.40px;top:577px;font-size:12.5px;line-height:12.5px;">R</div>
<div class="t" style="left:827.99px;top:597px;font-size:12.5px;line-height:12.5px;transform:scaleX(1.0245);transform-origin:0 0;">Convert mp4 fix video only</div>
<div class="t" style="left:1084.40px;top:597px;font-size:12.5px;line-height:12.5px;transform:scaleX(1.0849);transform-origin:0 0;">/home/woody/...</div>
<div class="t" style="left:1197.40px;top:597px;font-size:12.5px;line-height:12.5px;">R</div>
<div class="t" style="left:827.99px;top:617px;font-size:12.5px;line-height:12.5px;transform:scaleX(1.0198);transform-origin:0 0;">Convert video fix aac audio only</div>
<div class="t" style="left:1084.40px;top:617px;font-size:12.5px;line-height:12.5px;transform:scaleX(1.0849);transform-origin:0 0;">/home/woody/...</div>
<div class="t" style="left:1197.40px;top:617px;font-size:12.5px;line-height:12.5px;">R</div>
<div class="t" style="left:827.98px;top:637px;font-size:12.5px;line-height:12.5px;transform:scaleX(1.0370);transform-origin:0 0;">Convert .mkv file</div>
<div class="t" style="left:1084.40px;top:637px;font-size:12.5px;line-height:12.5px;transform:scaleX(1.0849);transform-origin:0 0;">/home/woody/...</div>
<div class="t" style="left:1197.40px;top:637px;font-size:12.5px;line-height:12.5px;">R</div>
<div class="t" style="left:828.60px;top:657px;font-size:12.5px;line-height:12.5px;transform:scaleX(1.0223);transform-origin:0 0;">Archive and Download...</div>
<div class="t" style="left:1083.56px;top:657px;font-size:12.5px;line-height:12.5px;transform:scaleX(1.0533);transform-origin:0 0;">powershell.exe...</div>
<div class="t" style="left:1197.40px;top:657px;font-size:12.5px;line-height:12.5px;">L</div>
<div class="r" style="left:822px;top:651px;width:413px;height:1px;background:#333333;"></div>
<div class="r" style="left:1236px;top:327px;width:20px;height:346px;background:#f0f0f0;"></div>
<div class="r" style="left:1236px;top:349px;width:19px;height:210px;background:#cdcdcd;"></div>
<svg class="r" style="left:1240px;top:334.5px" width="12" height="8" viewBox="0 0 12 8"><path d="M1 7l5-5 5 5" fill="none" stroke="#606060" stroke-width="1.8"/></svg>
<svg class="r" style="left:1240px;top:657px" width="12" height="8" viewBox="0 0 12 8"><path d="M1 1l5 5 5-5" fill="none" stroke="#606060" stroke-width="1.8"/></svg>
<div class="r" style="left:821px;top:683px;width:100px;height:28px;background:;background:#e1e1e1;border:1px solid #adadad"></div>
<div class="t" style="left:846px;top:692px;font-size:12.5px;line-height:12.5px"><span class="u">A</span>dd...</div>
<div class="r" style="left:903px;top:687px;width:1px;height:20px;background:#333;"></div>
<svg class="r" style="left:907px;top:694px" width="10" height="6" viewBox="0 0 10 6"><path d="M0 0H10L5 5.5Z" fill="#000"/></svg>
<div class="r" style="left:939px;top:683px;width:100px;height:28px;background:;background:#cccccc;border:1px solid #bfbfbf"></div>
<div class="t" style="left:972px;top:692px;font-size:12.5px;line-height:12.5px;color:#8a8a8a"><span class="u">E</span>dit...</div>
<div class="r" style="left:1158px;top:682px;width:100px;height:29px;background:;background:#cccccc;border:1px solid #bfbfbf"></div>
<div class="t" style="left:1199px;top:692px;font-size:12.5px;line-height:12.5px;color:#8a8a8a"><span class="u">U</span>p</div>
<div class="r" style="left:821px;top:720px;width:100px;height:29px;background:;background:#cccccc;border:1px solid #bfbfbf"></div>
<div class="t" style="left:848px;top:730px;font-size:12.5px;line-height:12.5px;color:#8a8a8a"><span class="u">R</span>emove</div>
<div class="r" style="left:1158px;top:720px;width:100px;height:29px;background:;background:#cccccc;border:1px solid #bfbfbf"></div>
<div class="t" style="left:1192px;top:730px;font-size:12.5px;line-height:12.5px;color:#8a8a8a"><span class="u">D</span>own</div>
<div class="r" style="left:972px;top:791px;width:90px;height:28px;background:;background:#e1e1e1;border:2px solid #0078d7"></div>
<div class="t" style="left:1009.06px;top:801px;font-size:12.5px;line-height:12.5px;transform:scaleX(0.8793);transform-origin:0 0;">OK</div>
<div class="r" style="left:1080px;top:791px;width:91px;height:28px;background:;background:#e1e1e1;border:1px solid #adadad"></div>
<div class="t" style="left:1105.40px;top:801px;font-size:12.5px;line-height:12.5px;transform:scaleX(1.0053);transform-origin:0 0;">Cancel</div>
<div class="r" style="left:1189px;top:791px;width:90px;height:28px;background:;background:#e1e1e1;border:1px solid #adadad"></div>
<div class="t" style="left:1220.30px;top:801px;font-size:12.5px;line-height:12.5px;">Help</div>
</body></html>
